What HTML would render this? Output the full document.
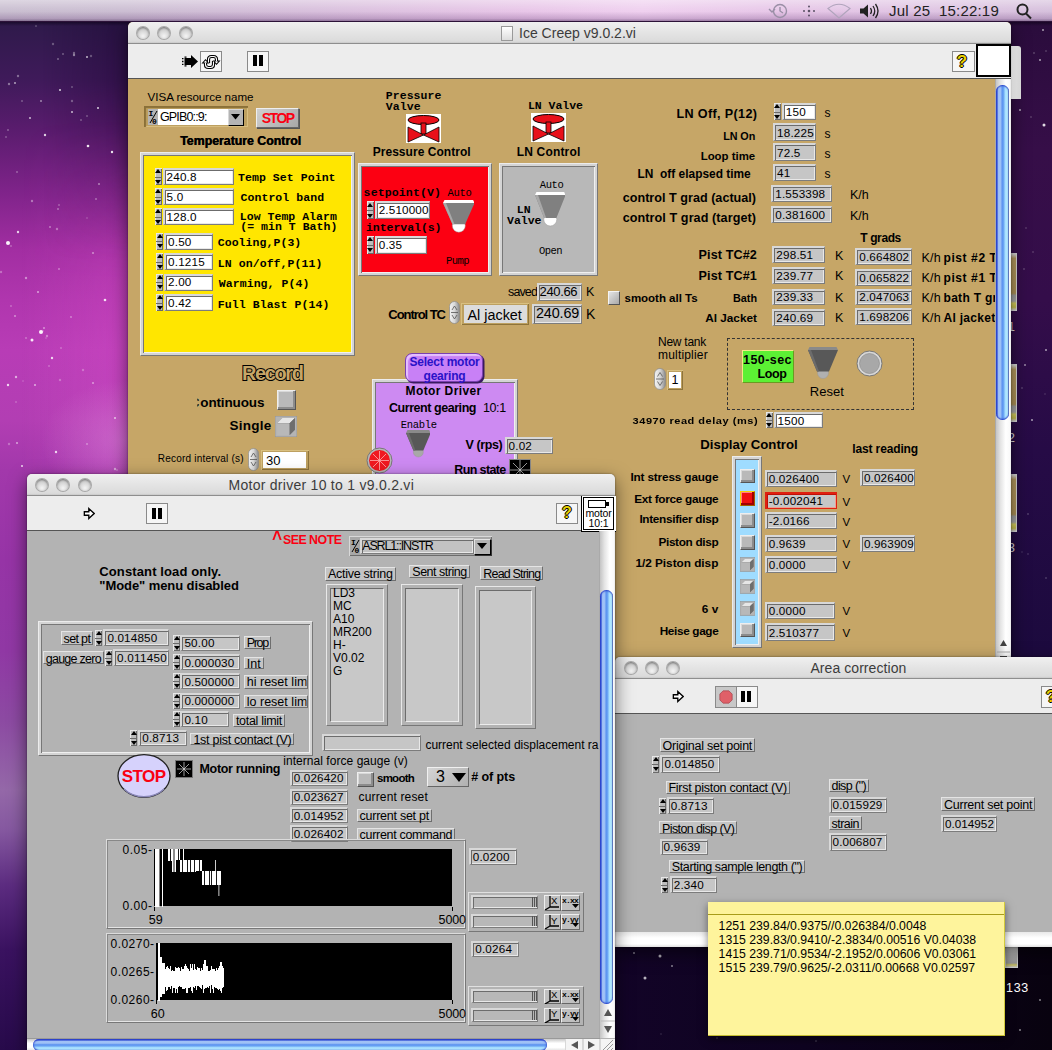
<!DOCTYPE html>
<html><head><meta charset="utf-8"><title>Ice Creep</title>
<style>
html,body{margin:0;padding:0;}
body{width:1052px;height:1050px;overflow:hidden;background:#1a0830;font-family:"Liberation Sans",sans-serif;}
#root{position:relative;width:1052px;height:1050px;overflow:hidden;}
#root div,#root svg,#root i{position:absolute;box-sizing:content-box;}
.t{white-space:pre;color:#000;font-family:"Liberation Sans",sans-serif;}
.m{font-family:"Liberation Mono",monospace;}
.b{font-weight:bold;}
.f{border-style:solid;border-width:2px 1px 1px 2px;border-color:#d8d8d8 #7c7c7c #7c7c7c #d8d8d8;box-shadow:inset 1px 1px 0 #6c6c6c,inset -1px -1px 0 #e8e8e8;}
.lb{border:1px solid;border-color:#e4e4e4 #6e6e6e #6e6e6e #e4e4e4;background:#c4c4c4;}
.sp{background:#bdbdbd;box-shadow:inset 1px 1px 0 #e8e8e8,inset -1px -1px 0 #6a6a6a;}
.sp i{position:absolute;left:0;width:100%;height:50%;}
.sp i.u{top:0;border-bottom:1px solid #6a6a6a;box-sizing:border-box;}
.sp i.d{top:50%;}
.sp i.u:after{content:"";position:absolute;left:50%;top:50%;margin:-3px 0 0 -3px;border:3px solid transparent;border-top:0;border-bottom:4px solid #000;}
.sp i.d:after{content:"";position:absolute;left:50%;top:50%;margin:-1px 0 0 -3px;border:3px solid transparent;border-bottom:0;border-top:4px solid #000;}
.win{box-shadow:0 6px 18px rgba(0,0,0,.55),0 0 2px rgba(0,0,0,.5);}
.tb{background:linear-gradient(#f0f0f0,#e4e4e4 50%,#dbdbdb 92%,#c8c8c8);border-radius:5px 5px 0 0;border-bottom:1px solid #8e8e8e;}
.tl{border-radius:50%;background:radial-gradient(circle at 50% 75%,#f4f4f4,#cfcfcf 60%,#b4b4b4);box-shadow:inset 0 1px 2px rgba(0,0,0,.4),0 0 0 1px #a8a8a8;}
.tool{background:#ededed;border-bottom:1px solid #555;}
.btn{background:#f6f6f6;border:1px solid #8a8a8a;}
.frame{border:1px solid;border-color:#ececec #777 #777 #ececec;box-shadow:inset 1px 1px 0 #d4d4d4,inset -1px -1px 0 #d4d4d4,inset 2px 2px 0 #d4d4d4,inset -2px -2px 0 #d4d4d4,inset 3px 3px 0 #777,inset -3px -3px 0 #f0f0f0;}

</style></head>
<body>
<div id="root">
<!-- desktop -->
<div class="" style="left:0px;top:0px;width:140px;height:1050px;background:linear-gradient(180deg,#2c1a48 0px,#2e1a4a 21px,#3f1a5a 80px,#5a1c6e 130px,#7e2389 190px,#a22ea2 250px,#b036ae 300px,#b83cb6 350px,#b23eb3 420px,#a238ab 470px,#9634a6 560px,#9038a4 650px,#8c4aa2 720px,#9468a8 790px,#8558a0 830px,#5c2c80 885px,#3a1260 950px,#270a4a 1050px);"></div>
<div class="" style="left:0px;top:120px;width:140px;height:360px;background:linear-gradient(90deg,rgba(255,90,220,0) 15%,rgba(255,100,225,.2) 95%);-webkit-mask-image:linear-gradient(180deg,rgba(0,0,0,0),#000 45%);mask-image:linear-gradient(180deg,rgba(0,0,0,0),#000 45%);"></div>
<div class="" style="left:0px;top:21px;width:140px;height:240px;background:linear-gradient(90deg,rgba(20,0,40,0) 30%,rgba(20,0,40,.38) 100%);-webkit-mask-image:linear-gradient(180deg,#000 25%,rgba(0,0,0,0));mask-image:linear-gradient(180deg,#000 25%,rgba(0,0,0,0));"></div>
<div class="" style="left:40px;top:380px;width:100px;height:110px;background:radial-gradient(ellipse at 85% 55%,rgba(225,150,225,.4),rgba(225,150,225,0) 70%);"></div>
<div class="" style="left:1000px;top:0px;width:52px;height:1050px;background:linear-gradient(180deg,#2a0c3c 21px,#360e48 150px,#340d4a 300px,#260b46 450px,#1c0a3e 650px,#14052c 900px,#12032a 1050px);"></div>
<div class="" style="left:600px;top:940px;width:452px;height:110px;background:linear-gradient(90deg,#130428,#0e0320 45%,#08020f 100%);"></div>
<svg width="1052" height="1050" style="left:0;top:0;filter:blur(.6px)"><circle cx="8" cy="243" r="2" fill="#fff" fill-opacity="0.95"/><circle cx="18" cy="232" r="1.2" fill="#fff" fill-opacity="0.8"/><circle cx="41" cy="332" r="2" fill="#fff" fill-opacity="0.95"/><circle cx="32" cy="340" r="1.5" fill="#fff" fill-opacity="0.9"/><circle cx="88" cy="146" r="1.3" fill="#fff" fill-opacity="0.9"/><circle cx="112" cy="152" r="1.2" fill="#fff" fill-opacity="0.9"/><circle cx="60" cy="90" r="1" fill="#fff" fill-opacity="0.8"/><circle cx="98" cy="108" r="1" fill="#fff" fill-opacity="0.8"/><circle cx="30" cy="118" r="1" fill="#fff" fill-opacity="0.7"/><circle cx="45" cy="135" r="1.2" fill="#fff" fill-opacity="0.8"/><circle cx="72" cy="112" r="1" fill="#fff" fill-opacity="0.7"/><circle cx="87" cy="57" r="1" fill="#fff" fill-opacity="0.7"/><circle cx="105" cy="300" r="1.3" fill="#fff" fill-opacity="0.85"/><circle cx="52" cy="358" r="1.2" fill="#fff" fill-opacity="0.8"/><circle cx="8" cy="385" r="1.2" fill="#fff" fill-opacity="0.8"/><circle cx="56" cy="452" r="1.2" fill="#fff" fill-opacity="0.8"/><circle cx="115" cy="418" r="1" fill="#fff" fill-opacity="0.7"/><circle cx="22" cy="466" r="1" fill="#fff" fill-opacity="0.8"/><circle cx="1044" cy="125" r="1.5" fill="#fff" fill-opacity="0.85"/><circle cx="1040" cy="60" r="1" fill="#fff" fill-opacity="0.6"/><circle cx="1020" cy="110" r="1" fill="#fff" fill-opacity="0.6"/><circle cx="1043" cy="30" r="1" fill="#fff" fill-opacity="0.6"/><circle cx="1032" cy="420" r="1" fill="#fff" fill-opacity="0.6"/><circle cx="1046" cy="350" r="1" fill="#fff" fill-opacity="0.6"/><circle cx="1025" cy="365" r="1" fill="#fff" fill-opacity="0.5"/><circle cx="660" cy="956" r="1.5" fill="#fff" fill-opacity="0.7"/><circle cx="645" cy="978" r="1.5" fill="#fff" fill-opacity="0.7"/><circle cx="672" cy="966" r="1" fill="#fff" fill-opacity="0.5"/><circle cx="634" cy="953" r="1" fill="#fff" fill-opacity="0.5"/><circle cx="1040" cy="1000" r="1" fill="#fff" fill-opacity="0.5"/><circle cx="1020" cy="1030" r="1" fill="#fff" fill-opacity="0.5"/><circle cx="41" cy="101" r="1" fill="#fff" fill-opacity="0.48"/><circle cx="9" cy="444" r="1.2" fill="#fff" fill-opacity="0.28"/><circle cx="74" cy="53" r="1.2" fill="#fff" fill-opacity="0.33"/><circle cx="11" cy="246" r="1" fill="#fff" fill-opacity="0.27"/><circle cx="11" cy="306" r="1" fill="#fff" fill-opacity="0.27"/><circle cx="72" cy="87" r="0.8" fill="#fff" fill-opacity="0.47"/><circle cx="74" cy="55" r="1.2" fill="#fff" fill-opacity="0.45"/><circle cx="6" cy="137" r="0.8" fill="#fff" fill-opacity="0.44"/><circle cx="17" cy="172" r="1" fill="#fff" fill-opacity="0.3"/><circle cx="15" cy="316" r="1" fill="#fff" fill-opacity="0.45"/><circle cx="87" cy="116" r="0.8" fill="#fff" fill-opacity="0.45"/><circle cx="81" cy="120" r="1" fill="#fff" fill-opacity="0.28"/><circle cx="91" cy="56" r="1.2" fill="#fff" fill-opacity="0.27"/><circle cx="26" cy="278" r="1.2" fill="#fff" fill-opacity="0.44"/><circle cx="99" cy="184" r="1" fill="#fff" fill-opacity="0.45"/><circle cx="58" cy="209" r="1" fill="#fff" fill-opacity="0.34"/><circle cx="23" cy="381" r="0.8" fill="#fff" fill-opacity="0.28"/><circle cx="38" cy="292" r="1" fill="#fff" fill-opacity="0.56"/><circle cx="93" cy="253" r="1" fill="#fff" fill-opacity="0.46"/><circle cx="9" cy="84" r="1.2" fill="#fff" fill-opacity="0.4"/><circle cx="96" cy="199" r="0.8" fill="#fff" fill-opacity="0.58"/><circle cx="53" cy="44" r="1.2" fill="#fff" fill-opacity="0.28"/><circle cx="71" cy="317" r="1" fill="#fff" fill-opacity="0.37"/><circle cx="44" cy="328" r="1" fill="#fff" fill-opacity="0.45"/><circle cx="58" cy="59" r="0.8" fill="#fff" fill-opacity="0.58"/><circle cx="60" cy="380" r="1.2" fill="#fff" fill-opacity="0.27"/><circle cx="93" cy="383" r="1" fill="#fff" fill-opacity="0.48"/><circle cx="87" cy="444" r="1" fill="#fff" fill-opacity="0.35"/><circle cx="49" cy="366" r="1" fill="#fff" fill-opacity="0.26"/><circle cx="59" cy="205" r="0.8" fill="#fff" fill-opacity="0.46"/><circle cx="63" cy="54" r="0.8" fill="#fff" fill-opacity="0.52"/><circle cx="16" cy="402" r="0.8" fill="#fff" fill-opacity="0.39"/><circle cx="117" cy="470" r="1" fill="#fff" fill-opacity="0.28"/><circle cx="57" cy="229" r="1.2" fill="#fff" fill-opacity="0.35"/><circle cx="17" cy="443" r="1" fill="#fff" fill-opacity="0.55"/><circle cx="35" cy="385" r="1" fill="#fff" fill-opacity="0.6"/><circle cx="87" cy="218" r="0.8" fill="#fff" fill-opacity="0.3"/><circle cx="22" cy="101" r="0.8" fill="#fff" fill-opacity="0.48"/><circle cx="1" cy="272" r="1.2" fill="#fff" fill-opacity="0.31"/><circle cx="36" cy="26" r="0.8" fill="#fff" fill-opacity="0.4"/><circle cx="47" cy="336" r="1.2" fill="#fff" fill-opacity="0.36"/><circle cx="16" cy="377" r="1.2" fill="#fff" fill-opacity="0.58"/><circle cx="83" cy="370" r="1.2" fill="#fff" fill-opacity="0.27"/><circle cx="115" cy="469" r="1.2" fill="#fff" fill-opacity="0.53"/><circle cx="50" cy="227" r="1" fill="#fff" fill-opacity="0.39"/><circle cx="61" cy="348" r="1" fill="#fff" fill-opacity="0.27"/><circle cx="8" cy="130" r="1" fill="#fff" fill-opacity="0.31"/><circle cx="43" cy="331" r="0.8" fill="#fff" fill-opacity="0.29"/><circle cx="72" cy="101" r="1.2" fill="#fff" fill-opacity="0.29"/><circle cx="46" cy="338" r="0.8" fill="#fff" fill-opacity="0.27"/><circle cx="26" cy="338" r="1" fill="#fff" fill-opacity="0.3"/><circle cx="32" cy="201" r="1.2" fill="#fff" fill-opacity="0.38"/><circle cx="15" cy="83" r="1" fill="#fff" fill-opacity="0.6"/><circle cx="59" cy="269" r="1" fill="#fff" fill-opacity="0.36"/><circle cx="18" cy="76" r="1.2" fill="#fff" fill-opacity="0.37"/><circle cx="1028" cy="514" r="0.7" fill="#fff" fill-opacity="0.41"/><circle cx="1022" cy="552" r="0.7" fill="#fff" fill-opacity="0.21"/><circle cx="1045" cy="394" r="0.7" fill="#fff" fill-opacity="0.24"/><circle cx="1046" cy="51" r="0.7" fill="#fff" fill-opacity="0.39"/><circle cx="1031" cy="117" r="0.7" fill="#fff" fill-opacity="0.37"/><circle cx="1028" cy="554" r="0.7" fill="#fff" fill-opacity="0.29"/><circle cx="1022" cy="388" r="0.7" fill="#fff" fill-opacity="0.39"/><circle cx="1046" cy="578" r="0.7" fill="#fff" fill-opacity="0.39"/><circle cx="1033" cy="252" r="0.7" fill="#fff" fill-opacity="0.35"/><circle cx="1024" cy="269" r="0.7" fill="#fff" fill-opacity="0.4"/><circle cx="1026" cy="228" r="0.7" fill="#fff" fill-opacity="0.33"/><circle cx="1034" cy="53" r="0.7" fill="#fff" fill-opacity="0.45"/><circle cx="1022" cy="985" r="0.7" fill="#fff" fill-opacity="0.29"/><circle cx="717" cy="1038" r="0.7" fill="#fff" fill-opacity="0.32"/><circle cx="794" cy="1007" r="0.7" fill="#fff" fill-opacity="0.36"/><circle cx="988" cy="994" r="0.7" fill="#fff" fill-opacity="0.39"/><circle cx="804" cy="960" r="0.7" fill="#fff" fill-opacity="0.24"/><circle cx="734" cy="1010" r="0.7" fill="#fff" fill-opacity="0.24"/><circle cx="722" cy="1011" r="0.7" fill="#fff" fill-opacity="0.32"/><circle cx="930" cy="950" r="0.7" fill="#fff" fill-opacity="0.3"/><circle cx="952" cy="994" r="0.7" fill="#fff" fill-opacity="0.36"/><circle cx="661" cy="1034" r="0.7" fill="#fff" fill-opacity="0.22"/><circle cx="816" cy="1041" r="0.7" fill="#fff" fill-opacity="0.35"/><circle cx="862" cy="972" r="0.7" fill="#fff" fill-opacity="0.29"/><circle cx="943" cy="992" r="0.7" fill="#fff" fill-opacity="0.22"/><circle cx="987" cy="1000" r="0.7" fill="#fff" fill-opacity="0.29"/></svg>
<div class="" style="left:0px;top:22px;width:1052px;height:4px;background:linear-gradient(180deg,rgba(10,0,20,.55),rgba(10,0,20,0));"></div>
<div class="" style="left:1010px;top:253px;width:6px;height:56px;background:linear-gradient(180deg,#d8d8d8 0,#b89c60 8%,#b09458 70%,#a0a0a0 74%,#a8a8a8 84%,#d8d060 88%,#c8c050 95%,#d0d0d0 100%);border:1px solid #d8d8d8;border-left:0;"></div>
<div class="" style="left:1010px;top:364px;width:6px;height:56px;background:linear-gradient(180deg,#d8d8d8 0,#b89c60 8%,#b09458 70%,#a0a0a0 74%,#a8a8a8 84%,#d8d060 88%,#c8c050 95%,#d0d0d0 100%);border:1px solid #d8d8d8;border-left:0;"></div>
<div class="" style="left:1010px;top:474px;width:6px;height:56px;background:linear-gradient(180deg,#d8d8d8 0,#b89c60 8%,#b09458 70%,#a0a0a0 74%,#a8a8a8 84%,#d8d060 88%,#c8c050 95%,#d0d0d0 100%);border:1px solid #d8d8d8;border-left:0;"></div>
<div class="t" style="left:1008.0px;top:321.0px;font-size:12.5px;line-height:12.5px;color:#ddd;">1</div>
<div class="t" style="left:1008.0px;top:432.0px;font-size:12.5px;line-height:12.5px;color:#ddd;">2</div>
<div class="t" style="left:1008.0px;top:542.0px;font-size:12.5px;line-height:12.5px;color:#ddd;">3</div>
<div class="" style="left:1005px;top:946px;width:11px;height:20px;background:linear-gradient(180deg,#d8d8d8,#9a9a9a 80%,#c8c060 90%,#bbb);border:1px solid #ccc;"></div>
<div class="t" style="left:1006.0px;top:982.0px;font-size:12.5px;line-height:12.5px;letter-spacing:0.71px;color:#fff;">133</div>
<!-- Ice Creep -->
<div class="win" style="left:128px;top:22px;width:883px;height:640px;background:#c6a667;border-radius:5px 5px 0 0;"></div>
<div class="tb" style="left:128px;top:22px;width:883px;height:21px;"></div>
<div class="" style="left:1010px;top:46px;width:11px;height:52.5px;background:linear-gradient(90deg,#b4b4b4,#d6d6d6 20%,#dadada 60%,#d6d6d6);border-radius:0 3px 0 0;"></div>
<div class="tl" style="left:136.5px;top:27px;width:12px;height:12px;"></div>
<div class="tl" style="left:158px;top:27px;width:12px;height:12px;"></div>
<div class="tl" style="left:179.5px;top:27px;width:12px;height:12px;"></div>
<div class="" style="left:501px;top:26px;width:10px;height:13px;background:linear-gradient(#fff,#ddd);border:1px solid #999;"></div>
<div class="t" style="left:519.0px;top:26.0px;font-size:14px;line-height:14px;letter-spacing:0.01px;color:#3c3c3c;">Ice Creep v9.0.2.vi</div>
<div class="tool" style="left:128px;top:44px;width:883px;height:34px;"></div>
<svg style="left:181.500px;top:55px" width="16" height="13" viewBox="0 0 16 13"><path d="M0 3h1.500v1.300H0zM0 5.800h1.500v1.400H0zM0 8.700h1.500V10H0zM2.500 1.500h2v1.300h-2zM2.500 10.200h2v1.300h-2zM2.500 3h6.500V0l7 6.500L9 13v-3H2.500z" fill="#000"/></svg>
<div class="btn" style="left:200px;top:51px;width:20px;height:19px;"></div>
<svg style="left:200px;top:51.500px" width="22" height="20" viewBox="0 0 22 20"><g fill="none" stroke="#000" stroke-width="3.200"><path d="M8.500 11V7.500Q8.500 4.500 11.500 4.500H13.500Q16.500 4.500 16.500 7.500V9"/><path d="M13.500 9V12.500Q13.500 15.500 10.500 15.500H8.500Q5.500 15.500 5.500 12.500V11"/></g><path d="M12.500 8.500h8L16.500 13zM9.500 11.500h-8L5.500 7z" fill="#000"/><g fill="none" stroke="#fff" stroke-width="1.100"><path d="M8.500 10.500V7.500Q8.500 4.500 11.500 4.500H13.500Q16.500 4.500 16.500 7.500V9.500"/><path d="M13.500 9.500V12.500Q13.500 15.500 10.500 15.500H8.500Q5.500 15.500 5.500 12.500V10.500"/></g><path d="M14.600 9.500h3.800L16.500 11.600zM7.400 10.500H3.600L5.500 8.400z" fill="#fff"/></svg>
<div class="btn" style="left:247px;top:51px;width:20px;height:19px;"></div>
<div class="" style="left:253px;top:55px;width:3.5px;height:11px;background:#000"></div>
<div class="" style="left:259px;top:55px;width:3.5px;height:11px;background:#000"></div>
<div class="btn" style="left:951.5px;top:51px;width:21px;height:19px;"></div>
<div class="t b" style="left:956.8px;top:53.0px;font-size:17px;line-height:17px;color:#e8d000;text-shadow:1px 0 0 #000,-1px 0 0 #000,0 1px 0 #000,0 -1px 0 #000;">?</div>
<div class="" style="left:976px;top:44px;width:30.5px;height:29px;background:#fff;border:2px solid #000;"></div>
<div class="" style="left:995px;top:79px;width:15px;height:583px;background:linear-gradient(90deg,#c4c4c4,#e4e4e4 30%,#fff 65%,#fafafa 90%,#e8e8e8);border-left:1px solid #aaa;"></div>
<div class="" style="left:996.2px;top:85px;width:12.6px;height:335px;border-radius:7px;background:linear-gradient(90deg,#2a40c8 0,#3a58d8 8%,#a4c4f6 20%,#9cc0f6 35%,#5c92f0 48%,#6aa4f4 58%,#a8e0ff 72%,#b4ecff 88%,#5a6c98 100%);box-shadow:inset 0 1px 1.500px #2a40c8,inset 0 -1px 1.500px #2a40c8;"></div>
<svg style="left:997px;top:628px" width="13" height="34" viewBox="0 0 13 34"><path d="M6.5 12L3 18h7z" fill="#444"/><path d="M0 24h13" stroke="#aaa"/><path d="M3 29h7" stroke="#444" stroke-width="2"/></svg>
<div class="t" style="left:147.5px;top:91.0px;font-size:11.6px;line-height:11.6px;letter-spacing:-0.02px;">VISA resource name</div>
<div class="" style="left:144px;top:105.5px;width:104px;height:21.5px;background:#bda060;box-shadow:inset 2px 2px 1px #8a7038,inset -1px -1px 0 #d8be80;"></div>
<div class="" style="left:147.5px;top:109px;width:10.5px;height:15.5px;background:#b4b4b4;"></div>
<div class="t m b" style="left:148.5px;top:110.0px;font-size:8px;line-height:8px;">I</div>
<div class="t m b" style="left:152.0px;top:118.0px;font-size:8px;line-height:8px;">0</div>
<svg style="left:147.500px;top:109px" width="11" height="16"><path d="M9 2L2 14" stroke="#000" stroke-width="1"/></svg>
<div class="" style="left:158px;top:109px;width:69.5px;height:15.5px;background:#fff;"></div>
<div class="t" style="left:160.0px;top:111.0px;font-size:12.5px;line-height:12.5px;letter-spacing:-0.85px;">GPIB0::9:</div>
<div class="" style="left:227.5px;top:109px;width:14px;height:14.5px;background:#b4b4b4;border:1px solid;border-color:#d8d8d8 #000 #000 #d8d8d8;"></div>
<svg style="left:231px;top:113.500px" width="9" height="6"><path d="M0 0h9L4.500 5.500z" fill="#000"/></svg>
<div class="" style="left:256px;top:108px;width:41px;height:18px;background:linear-gradient(135deg,#d0d0d0,#a8a8a8);border:1px solid;border-color:#eee #666 #666 #eee;box-shadow:1px 1px 0 #555;"></div>
<div class="t b" style="left:261.7px;top:111.0px;font-size:14px;line-height:14px;letter-spacing:-1.47px;color:#fa0012;">STOP</div>
<div class="t b" style="left:180.0px;top:135.0px;font-size:12.3px;line-height:12.3px;letter-spacing:0.01px;text-shadow:0.5px 0 0 #000;">Temperature Control</div>
<div class="frame" style="left:140px;top:152px;width:213px;height:202px;background:#ffe600;"></div>
<div class="sp" style="left:154.5px;top:168px;width:7px;height:17px"><i class="u"></i><i class="d"></i></div>
<div class="f" style="left:162.5px;top:168px;width:68px;height:14px;background:#fff;"></div>
<div class="t" style="left:166.5px;top:171.0px;font-size:11.7px;line-height:11.7px;letter-spacing:0.20px;">240.8</div>
<div class="sp" style="left:154.5px;top:188px;width:7px;height:17px"><i class="u"></i><i class="d"></i></div>
<div class="f" style="left:162.5px;top:188px;width:68px;height:14px;background:#fff;"></div>
<div class="t" style="left:166.5px;top:191.0px;font-size:11.7px;line-height:11.7px;letter-spacing:0.19px;">5.0</div>
<div class="sp" style="left:154.5px;top:208px;width:7px;height:17px"><i class="u"></i><i class="d"></i></div>
<div class="f" style="left:162.5px;top:208px;width:68px;height:14px;background:#fff;"></div>
<div class="t" style="left:166.5px;top:211.0px;font-size:11.7px;line-height:11.7px;letter-spacing:0.20px;">128.0</div>
<div class="sp" style="left:156px;top:232.5px;width:7px;height:17px"><i class="u"></i><i class="d"></i></div>
<div class="f" style="left:164px;top:232.5px;width:45.5px;height:14px;background:#fff;"></div>
<div class="t" style="left:168.0px;top:236.0px;font-size:11.7px;line-height:11.7px;letter-spacing:0.19px;">0.50</div>
<div class="sp" style="left:156px;top:253px;width:7px;height:17px"><i class="u"></i><i class="d"></i></div>
<div class="f" style="left:164px;top:253px;width:45.5px;height:14px;background:#fff;"></div>
<div class="t" style="left:168.0px;top:256.0px;font-size:11.7px;line-height:11.7px;letter-spacing:0.20px;">0.1215</div>
<div class="sp" style="left:156px;top:273.5px;width:7px;height:17px"><i class="u"></i><i class="d"></i></div>
<div class="f" style="left:164px;top:273.5px;width:45.5px;height:14px;background:#fff;"></div>
<div class="t" style="left:168.0px;top:276.0px;font-size:11.7px;line-height:11.7px;letter-spacing:0.19px;">2.00</div>
<div class="sp" style="left:156px;top:294px;width:7px;height:17px"><i class="u"></i><i class="d"></i></div>
<div class="f" style="left:164px;top:294px;width:45.5px;height:14px;background:#fff;"></div>
<div class="t" style="left:168.0px;top:297.0px;font-size:11.7px;line-height:11.7px;letter-spacing:0.19px;">0.42</div>
<div class="t m b" style="left:238.0px;top:172.0px;font-size:11.5px;line-height:11.5px;letter-spacing:0.07px;">Temp Set Point</div>
<div class="t m b" style="left:240.5px;top:192.0px;font-size:11.5px;line-height:11.5px;letter-spacing:0.07px;">Control band</div>
<div class="t m b" style="left:239.8px;top:211.0px;font-size:11.5px;line-height:11.5px;letter-spacing:0.03px;">Low Temp Alarm</div>
<div class="t m b" style="left:240.3px;top:221.0px;font-size:11.5px;line-height:11.5px;letter-spacing:0.03px;">(= min T Bath)</div>
<div class="t m b" style="left:217.7px;top:237.0px;font-size:11.5px;line-height:11.5px;letter-spacing:0.07px;">Cooling,P(3)</div>
<div class="t m b" style="left:217.7px;top:258.0px;font-size:11.5px;line-height:11.5px;letter-spacing:0.09px;">LN on/off,P(11)</div>
<div class="t m b" style="left:218.8px;top:278.0px;font-size:11.5px;line-height:11.5px;letter-spacing:0.07px;">Warming, P(4)</div>
<div class="t m b" style="left:217.7px;top:299.0px;font-size:11.5px;line-height:11.5px;letter-spacing:0.09px;">Full Blast P(14)</div>
<div class="t m b" style="left:385.8px;top:90.0px;font-size:11.5px;line-height:11.5px;letter-spacing:0.05px;">Pressure</div>
<div class="t m b" style="left:385.8px;top:101.0px;font-size:11.5px;line-height:11.5px;letter-spacing:0.10px;">Valve</div>
<svg style="left:405.5px;top:114px" width="35" height="29" viewBox="0 0 35 29"><rect width="35" height="29" fill="#fff"/><ellipse cx="17.5" cy="6" rx="15.5" ry="4.5" fill="#e8101a" stroke="#000"/><rect x="15" y="9" width="5" height="11" fill="#e8101a" stroke="#000" stroke-width=".8"/><path d="M2 13l15.5 8L2 28zM33 13l-15.5 8L33 28z" fill="#e8101a" stroke="#000" stroke-width=".8"/></svg>
<div class="t b" style="left:372.7px;top:146.0px;font-size:12px;line-height:12px;letter-spacing:0.04px;">Pressure Control</div>
<div class="t m b" style="left:528.0px;top:100.0px;font-size:11.5px;line-height:11.5px;letter-spacing:-0.03px;">LN Valve</div>
<svg style="left:531px;top:113px" width="35" height="29" viewBox="0 0 35 29"><rect width="35" height="29" fill="#fff"/><ellipse cx="17.5" cy="6" rx="15.5" ry="4.5" fill="#e8101a" stroke="#000"/><rect x="15" y="9" width="5" height="11" fill="#e8101a" stroke="#000" stroke-width=".8"/><path d="M2 13l15.5 8L2 28zM33 13l-15.5 8L33 28z" fill="#e8101a" stroke="#000" stroke-width=".8"/></svg>
<div class="t b" style="left:516.8px;top:146.0px;font-size:12px;line-height:12px;letter-spacing:0.16px;">LN Control</div>
<div class="frame" style="left:357.5px;top:162.5px;width:132.5px;height:111px;background:#fc0012;"></div>
<div class="t m b" style="left:363.6px;top:187.0px;font-size:11.5px;line-height:11.5px;letter-spacing:0.14px;">setpoint(V)</div>
<div class="sp" style="left:366.7px;top:201px;width:7px;height:18px"><i class="u"></i><i class="d"></i></div>
<div class="f" style="left:374.7px;top:201px;width:52.5px;height:15px;background:#fff;"></div>
<div class="t" style="left:378.7px;top:204.0px;font-size:11.7px;line-height:11.7px;letter-spacing:0.15px;">2.510000</div>
<div class="t m b" style="left:366.0px;top:222.0px;font-size:11.5px;line-height:11.5px;letter-spacing:-0.04px;">interval(s)</div>
<div class="sp" style="left:366.7px;top:236px;width:7px;height:17.5px"><i class="u"></i><i class="d"></i></div>
<div class="f" style="left:374.7px;top:236px;width:49px;height:14.5px;background:#fff;"></div>
<div class="t" style="left:378.7px;top:239.0px;font-size:11.7px;line-height:11.7px;letter-spacing:0.19px;">0.35</div>
<div class="t m" style="left:447.6px;top:188.0px;font-size:10.5px;line-height:10.5px;letter-spacing:-0.30px;">Auto</div>
<svg style="left:442.7px;top:199.6px" width="31.6" height="33.7" viewBox="0 0 31.6 33.7"><circle cx="15.8" cy="25.7" r="6.5" fill="#fff" stroke="#999" stroke-width=".5"/><path d="M0 3 L31.6 3 L22.12 24.2 L9.48 24.2z" fill="#808080"/><path d="M0 3 L3 3 L11.48 24.2 L9.48 24.2z" fill="#a8a8a8"/><path d="M1.500 0h28.6l1.500 3H0z" fill="#fff"/></svg>
<div class="t m" style="left:445.9px;top:256.0px;font-size:10.5px;line-height:10.5px;letter-spacing:-0.55px;">Pump</div>
<div class="frame" style="left:499px;top:162.5px;width:96.5px;height:111px;background:#b8b8b8;"></div>
<div class="t m" style="left:539.8px;top:180.0px;font-size:10.5px;line-height:10.5px;letter-spacing:-0.43px;">Auto</div>
<svg style="left:534.9px;top:191.7px" width="30.6" height="35.5" viewBox="0 0 30.6 35.5"><circle cx="15.3" cy="27.5" r="6.5" fill="#fff" stroke="#999" stroke-width=".5"/><path d="M0 3 L30.6 3 L21.42 26 L9.18 26z" fill="#808080"/><path d="M0 3 L3 3 L11.18 26 L9.18 26z" fill="#a8a8a8"/><path d="M1.500 0h27.6l1.500 3H0z" fill="#fff"/></svg>
<div class="t m b" style="left:516.8px;top:204.0px;font-size:11.5px;line-height:11.5px;letter-spacing:0.10px;">LN</div>
<div class="t m b" style="left:507.0px;top:215.0px;font-size:11.5px;line-height:11.5px;letter-spacing:-0.00px;">Valve</div>
<div class="t m" style="left:539.0px;top:246.0px;font-size:10.5px;line-height:10.5px;letter-spacing:-0.55px;">Open</div>
<div class="t" style="left:508.0px;top:286.0px;font-size:12.5px;line-height:12.5px;letter-spacing:-0.87px;">saved</div>
<div class="f" style="left:536.6px;top:282.7px;width:42.2px;height:15px;background:#c6c6c6;"></div>
<div class="t" style="left:539.6px;top:285.0px;font-size:13px;line-height:13px;letter-spacing:-0.38px;">240.66</div>
<div class="t" style="left:586.0px;top:286.0px;font-size:12.5px;line-height:12.5px;">K</div>
<div class="t b" style="left:388.3px;top:308.0px;font-size:13px;line-height:13px;letter-spacing:-1.05px;">Control TC</div>
<svg style="left:449.4px;top:300.5px" width="11" height="23" viewBox="0 0 11 23"><defs><linearGradient id="og449" x1="0" x2="1"><stop offset="0" stop-color="#f4f4f4"/><stop offset=".5" stop-color="#d8d8d8"/><stop offset="1" stop-color="#8a8a8a"/></linearGradient></defs><rect x=".5" y=".5" width="10" height="22" rx="5.0" fill="url(#og449)" stroke="#8a8a8a" stroke-width=".7"/><path d="M3.0 9.0L5.5 5.0L8.0 9.0M3.0 14.0L5.5 18.0L8.0 14.0M2 11.5H9" stroke="#555" stroke-width=".8" fill="none"/></svg>
<div class="" style="left:461px;top:302.5px;width:68px;height:22.5px;background:#bda060;box-shadow:inset 1px 1px 0 #d9c080,inset -1px -1px 0 #8e743c;"></div>
<div class="" style="left:463.7px;top:305px;width:63px;height:17.5px;background:#dcdcdc;"></div>
<div class="t" style="left:467.5px;top:308.0px;font-size:14.3939px;line-height:14.3939px;">Al jacket</div>
<div class="f" style="left:532.4px;top:303.7px;width:46.4px;height:17.6px;background:#c6c6c6;"></div>
<div class="t" style="left:535.9px;top:306.0px;font-size:14.4px;line-height:14.4px;letter-spacing:-0.12px;">240.69</div>
<div class="t" style="left:586.0px;top:307.0px;font-size:14px;line-height:14px;">K</div>
<div class="" style="left:608px;top:290.5px;width:10px;height:12px;background:linear-gradient(135deg,#e4e4e4,#a8a8a8);border:1px solid;border-color:#f4f4f4 #555 #555 #f4f4f4;"></div>
<div class="t b" style="left:624.5px;top:293.0px;font-size:11.5px;line-height:11.5px;letter-spacing:-0.02px;">smooth all Ts</div>
<div class="frame" style="left:372.2px;top:378.6px;width:143.8px;height:110px;background:#cd8af2;"></div>
<div class="" style="left:405px;top:352.7px;width:76px;height:27.5px;background:#c880f6;border-radius:7px;border:1px solid #7a40b0;box-shadow:1.5px 1.5px 0 #3a1a60,inset 2px 2px 1px #e6c0ff;"></div>
<div class="t b" style="left:409.5px;top:356.0px;font-size:12px;line-height:12px;letter-spacing:-0.22px;color:#2a12c8;">Select motor</div>
<div class="t b" style="left:423.5px;top:370.0px;font-size:12px;line-height:12px;letter-spacing:-0.19px;color:#2a12c8;">gearing</div>
<div class="t b" style="left:405.6px;top:385.0px;font-size:12px;line-height:12px;letter-spacing:0.39px;">Motor Driver</div>
<div class="t b" style="left:389.0px;top:402.0px;font-size:12.5px;line-height:12.5px;letter-spacing:-0.45px;">Current gearing</div>
<div class="t" style="left:483.0px;top:402.0px;font-size:12.5px;line-height:12.5px;letter-spacing:-0.41px;">10:1</div>
<div class="t m" style="left:400.7px;top:420.0px;font-size:10.5px;line-height:10.5px;letter-spacing:-0.30px;">Enable</div>
<svg style="left:405.6px;top:430px" width="24.7" height="28.5" viewBox="0 0 24.7 28.5"><circle cx="12.35" cy="22" r="5" fill="#a8a8a8" stroke="#999" stroke-width=".5"/><path d="M0 3 L24.7 3 L17.29 20.5 L7.41 20.5z" fill="#585858"/><path d="M0 3 L3 3 L9.41 20.5 L7.41 20.5z" fill="#6c6c6c"/><path d="M1.500 0h21.7l1.500 3H0z" fill="#8a8a8a"/></svg>
<div class="t b" style="left:465.4px;top:439.0px;font-size:12.5px;line-height:12.5px;letter-spacing:-0.37px;">V (rps)</div>
<div class="f" style="left:504.5px;top:436.7px;width:45.7px;height:14.3px;background:#c6c6c6;"></div>
<div class="t" style="left:508.5px;top:440.0px;font-size:11.7px;line-height:11.7px;letter-spacing:0.19px;">0.02</div>
<div class="t b" style="left:454.3px;top:464.0px;font-size:12.5px;line-height:12.5px;letter-spacing:-0.62px;">Run state</div>
<div class="" style="left:509.4px;top:459px;width:20px;height:20px;background:#000;border:1px solid #888;"></div>
<svg style="left:510px;top:460px" width="20" height="14"><g stroke="#ddd" stroke-width=".7"><path d="M10 0v14M0 10h20M3 3l14 14M17 3L3 17"/></g></svg>
<svg style="left:366px;top:447px" width="27" height="27" viewBox="0 0 27 27"><circle cx="13.5" cy="13.5" r="12.5" fill="#b8b8b8" stroke="#777"/><circle cx="13.5" cy="13.5" r="10.5" fill="#f01820"/><g stroke="#ffb0b0" stroke-width=".8"><path d="M13.5 4v19M4 13.5h19M7 7l13 13M20 7L7 20"/></g></svg>
<div class="t b" style="left:242.0px;top:363.0px;font-size:20px;line-height:20px;letter-spacing:-1.40px;color:#c6a667;-webkit-text-stroke:2px #000;paint-order:stroke fill;">Record</div>
<div class="t b" style="left:200.3px;top:396.0px;font-size:13.5px;line-height:13.5px;letter-spacing:-0.14px;">ontinuous</div>
<div class="t b" style="left:189.8px;top:396.0px;font-size:13.5px;line-height:13.5px;clip-path:inset(0 0 0 7.6px);">C</div>
<div class="" style="left:277.4px;top:390px;width:17px;height:17.5px;background:#b9b9b9;border:1px solid;border-color:#eee #555 #555 #eee;box-shadow:inset -2px -2px 0 #8c8c8c,inset 1px 1px 0 #d8d8d8;"></div>
<div class="t b" style="left:229.5px;top:419.0px;font-size:13.5px;line-height:13.5px;letter-spacing:0.25px;">Single</div>
<svg style="left:275px;top:415.5px" width="22" height="21" viewBox="0 0 21 20"><rect width="21" height="20" fill="#b4b4b4" stroke="#888" stroke-width=".6"/><path d="M2 7L7 2h12v11l-5 5z" fill="#7a7a7a"/><path d="M2 7L7 2h12l-5 5z" fill="#e6e6e6"/><rect x="2" y="7" width="12" height="11" fill="#b8b8b8"/><path d="M14 7l5-5v11l-5 5z" fill="#6e6e6e"/></svg>
<div class="t" style="left:157.7px;top:454.0px;font-size:10px;line-height:10px;letter-spacing:0.23px;">Record interval (s)</div>
<svg style="left:248.2px;top:447.7px" width="11" height="23" viewBox="0 0 11 23"><defs><linearGradient id="og248" x1="0" x2="1"><stop offset="0" stop-color="#f4f4f4"/><stop offset=".5" stop-color="#d8d8d8"/><stop offset="1" stop-color="#8a8a8a"/></linearGradient></defs><rect x=".5" y=".5" width="10" height="22" rx="5.0" fill="url(#og248)" stroke="#8a8a8a" stroke-width=".7"/><path d="M3.0 9.0L5.5 5.0L8.0 9.0M3.0 14.0L5.5 18.0L8.0 14.0M2 11.5H9" stroke="#555" stroke-width=".8" fill="none"/></svg>
<div class="" style="left:260.5px;top:450px;width:48px;height:20px;background:#bda060;box-shadow:inset 1px 1px 0 #d9c080,inset -1px -1px 0 #8e743c;"></div>
<div class="" style="left:263px;top:452px;width:42.5px;height:15.5px;background:#fff;"></div>
<div class="t" style="left:266.0px;top:454.0px;font-size:13px;line-height:13px;">30</div>
<div class="t b" style="left:676.4px;top:108.0px;font-size:12.6px;line-height:12.6px;letter-spacing:0.36px;">LN Off, P(12)</div>
<div class="sp" style="left:773.7px;top:103px;width:7px;height:17.3px"><i class="u"></i><i class="d"></i></div>
<div class="f" style="left:781.7px;top:103px;width:31px;height:14.3px;background:#fff;"></div>
<div class="t" style="left:785.7px;top:106.0px;font-size:11.7px;line-height:11.7px;letter-spacing:0.22px;">150</div>
<div class="t" style="left:824.4px;top:107.0px;font-size:12px;line-height:12px;">s</div>
<div class="t b" style="left:723.2px;top:131.0px;font-size:10.8px;line-height:10.8px;letter-spacing:-0.08px;">LN On</div>
<div class="f" style="left:773px;top:123.4px;width:39.5px;height:14.3px;background:#c6c6c6;"></div>
<div class="t" style="left:777.0px;top:127.0px;font-size:11.7px;line-height:11.7px;letter-spacing:0.20px;">18.225</div>
<div class="t" style="left:824.4px;top:128.0px;font-size:12px;line-height:12px;">s</div>
<div class="t b" style="left:700.7px;top:151.0px;font-size:11.4078px;line-height:11.4078px;">Loop time</div>
<div class="f" style="left:773px;top:143.3px;width:39.5px;height:14.7px;background:#c6c6c6;"></div>
<div class="t" style="left:777.0px;top:147.0px;font-size:11.7px;line-height:11.7px;letter-spacing:0.19px;">72.5</div>
<div class="t" style="left:824.4px;top:148.0px;font-size:12px;line-height:12px;">s</div>
<div class="t b" style="left:637.6px;top:169.0px;font-size:11.9137px;line-height:11.9137px;">LN  off elapsed time</div>
<div class="f" style="left:773px;top:163.7px;width:39.5px;height:14.7px;background:#c6c6c6;"></div>
<div class="t" style="left:777.0px;top:167.0px;font-size:11.7px;line-height:11.7px;letter-spacing:0.22px;">41</div>
<div class="t" style="left:824.4px;top:168.0px;font-size:12px;line-height:12px;">s</div>
<div class="t b" style="left:622.7px;top:192.0px;font-size:12.6px;line-height:12.6px;letter-spacing:0.02px;">control T grad (actual)</div>
<div class="f" style="left:771.3px;top:185.2px;width:57.5px;height:14.3px;background:#c6c6c6;"></div>
<div class="t" style="left:775.3px;top:188.0px;font-size:11.7px;line-height:11.7px;letter-spacing:0.15px;">1.553398</div>
<div class="t" style="left:850.0px;top:189.0px;font-size:12.5px;line-height:12.5px;">K/h</div>
<div class="t b" style="left:622.7px;top:212.0px;font-size:12.6px;line-height:12.6px;letter-spacing:0.08px;">control T grad (target)</div>
<div class="f" style="left:771.3px;top:205.7px;width:57.5px;height:14.8px;background:#c6c6c6;"></div>
<div class="t" style="left:775.3px;top:209.0px;font-size:11.7px;line-height:11.7px;letter-spacing:0.15px;">0.381600</div>
<div class="t" style="left:850.0px;top:210.0px;font-size:12.5px;line-height:12.5px;">K/h</div>
<div class="t b" style="left:860.3px;top:232.0px;font-size:12px;line-height:12px;letter-spacing:-0.39px;">T grads</div>
<div class="t b" style="left:698.6px;top:249.0px;font-size:12.6px;line-height:12.6px;letter-spacing:0.11px;">Pist TC#2</div>
<div class="f" style="left:772.3px;top:246.4px;width:49.6px;height:13.8px;background:#c6c6c6;"></div>
<div class="t" style="left:776.3px;top:249.0px;font-size:11.7px;line-height:11.7px;letter-spacing:0.20px;">298.51</div>
<div class="t" style="left:835.0px;top:250.0px;font-size:12.5px;line-height:12.5px;">K</div>
<div class="f" style="left:855.3px;top:248.4px;width:54.2px;height:13.8px;background:#c6c6c6;overflow:hidden;"></div>
<div class="t" style="left:859.3px;top:251.0px;font-size:11.7px;line-height:11.7px;letter-spacing:0.15px;">0.664802</div>
<div class="t" style="left:921.5px;top:252.0px;font-size:12.5px;line-height:12.5px;letter-spacing:0.25px;">K/h</div>
<div class="t b" style="left:943.5px;top:252.0px;font-size:12px;line-height:12px;letter-spacing:0.59px;">pist #2 T</div>
<div class="t b" style="left:698.6px;top:270.0px;font-size:12.6px;line-height:12.6px;letter-spacing:0.11px;">Pist TC#1</div>
<div class="f" style="left:772.3px;top:267px;width:49.6px;height:13.8px;background:#c6c6c6;"></div>
<div class="t" style="left:776.3px;top:270.0px;font-size:11.7px;line-height:11.7px;letter-spacing:0.20px;">239.77</div>
<div class="t" style="left:835.0px;top:270.0px;font-size:12.5px;line-height:12.5px;">K</div>
<div class="f" style="left:855.3px;top:269px;width:54.2px;height:13.8px;background:#c6c6c6;overflow:hidden;"></div>
<div class="t" style="left:859.3px;top:272.0px;font-size:11.7px;line-height:11.7px;letter-spacing:0.15px;">0.065822</div>
<div class="t" style="left:921.5px;top:272.0px;font-size:12.5px;line-height:12.5px;letter-spacing:0.25px;">K/h</div>
<div class="t b" style="left:943.5px;top:272.0px;font-size:12px;line-height:12px;letter-spacing:0.59px;">pist #1 T</div>
<div class="t b" style="left:733.0px;top:293.0px;font-size:10.8px;line-height:10.8px;letter-spacing:-0.00px;">Bath</div>
<div class="f" style="left:772.3px;top:288.5px;width:49.6px;height:13.8px;background:#c6c6c6;"></div>
<div class="t" style="left:776.3px;top:291.0px;font-size:11.7px;line-height:11.7px;letter-spacing:0.20px;">239.33</div>
<div class="t" style="left:835.0px;top:292.0px;font-size:12.5px;line-height:12.5px;">K</div>
<div class="f" style="left:855.3px;top:288.5px;width:54.2px;height:13.8px;background:#c6c6c6;overflow:hidden;"></div>
<div class="t" style="left:859.3px;top:291.0px;font-size:11.7px;line-height:11.7px;letter-spacing:0.15px;">2.047063</div>
<div class="t" style="left:921.5px;top:292.0px;font-size:12.5px;line-height:12.5px;letter-spacing:0.25px;">K/h</div>
<div class="t b" style="left:943.5px;top:292.0px;font-size:12px;line-height:12px;letter-spacing:0.30px;">bath T gr</div>
<div class="t b" style="left:705.2px;top:312.0px;font-size:11.7949px;line-height:11.7949px;letter-spacing:0.00px;">Al Jacket</div>
<div class="f" style="left:772.3px;top:308.8px;width:49.6px;height:13.8px;background:#c6c6c6;"></div>
<div class="t" style="left:776.3px;top:312.0px;font-size:11.7px;line-height:11.7px;letter-spacing:0.20px;">240.69</div>
<div class="t" style="left:835.0px;top:312.0px;font-size:12.5px;line-height:12.5px;">K</div>
<div class="f" style="left:855.3px;top:308.3px;width:54.2px;height:13.8px;background:#c6c6c6;overflow:hidden;"></div>
<div class="t" style="left:859.3px;top:311.0px;font-size:11.7px;line-height:11.7px;letter-spacing:0.15px;">1.698206</div>
<div class="t" style="left:921.5px;top:312.0px;font-size:12.5px;line-height:12.5px;letter-spacing:0.25px;">K/h</div>
<div class="t b" style="left:943.5px;top:312.0px;font-size:12px;line-height:12px;letter-spacing:0.29px;">Al jacket</div>
<div class="t" style="left:658.0px;top:336.0px;font-size:12px;line-height:12px;letter-spacing:-0.25px;">New tank</div>
<div class="t" style="left:658.0px;top:349.0px;font-size:12px;line-height:12px;letter-spacing:0.18px;">multiplier</div>
<svg style="left:653.6px;top:367.7px" width="12" height="22" viewBox="0 0 12 22"><defs><linearGradient id="og653" x1="0" x2="1"><stop offset="0" stop-color="#f4f4f4"/><stop offset=".5" stop-color="#d8d8d8"/><stop offset="1" stop-color="#8a8a8a"/></linearGradient></defs><rect x=".5" y=".5" width="11" height="21" rx="5.5" fill="url(#og653)" stroke="#8a8a8a" stroke-width=".7"/><path d="M3.5 8.5L6.0 4.5L8.5 8.5M3.5 13.5L6.0 17.5L8.5 13.5M2 11.0H10" stroke="#555" stroke-width=".8" fill="none"/></svg>
<div class="" style="left:666.5px;top:370px;width:16px;height:19.5px;background:#bda060;box-shadow:inset 1px 1px 0 #d9c080,inset -1px -1px 0 #8e743c;"></div>
<div class="" style="left:668.8px;top:372px;width:12px;height:15.5px;background:#fff;"></div>
<div class="t" style="left:671.5px;top:374.0px;font-size:12.5px;line-height:12.5px;">1</div>
<div class="" style="left:727.3px;top:338px;width:184.5px;height:69.5px;border:1px dashed #333;"></div>
<div class="" style="left:741.7px;top:350.4px;width:50px;height:31px;background:#5cf034;border:1px solid;border-color:#f4e888 #6a9a22 #6a9a22 #f4e888;"></div>
<div class="t b" style="left:743.0px;top:354.0px;font-size:12.5px;line-height:12.5px;letter-spacing:0.45px;">150-sec</div>
<div class="t b" style="left:757.5px;top:368.0px;font-size:12.5px;line-height:12.5px;letter-spacing:-0.39px;">Loop</div>
<svg style="left:807.9px;top:346.8px" width="30" height="33" viewBox="0 0 30 33"><circle cx="15" cy="26" r="5.5" fill="#b0b0b0" stroke="#999" stroke-width=".5"/><path d="M0 3 L30 3 L21 24.5 L9 24.5z" fill="#585858"/><path d="M0 3 L3 3 L11 24.5 L9 24.5z" fill="#6c6c6c"/><path d="M1.500 0h27l1.500 3H0z" fill="#8a8a8a"/></svg>
<div class="t" style="left:809.7px;top:385.0px;font-size:13px;line-height:13px;letter-spacing:0.07px;">Reset</div>
<svg style="left:856px;top:350px" width="27" height="27" viewBox="0 0 27 27"><circle cx="13.5" cy="13.5" r="12.5" fill="#d8d8d8" stroke="#777"/><circle cx="13.5" cy="13.5" r="10" fill="#a8a8a8" stroke="#888" stroke-width=".6"/></svg>
<div class="t b" style="left:632.6px;top:415.0px;font-size:11px;line-height:11px;letter-spacing:0.53px;transform:scaleY(.9);">34970 read delay (ms)</div>
<div class="sp" style="left:765.5px;top:411.8px;width:7px;height:16.6px"><i class="u"></i><i class="d"></i></div>
<div class="f" style="left:773.5px;top:411.8px;width:46.5px;height:13.6px;background:#fff;"></div>
<div class="t" style="left:777.5px;top:415.0px;font-size:11.7px;line-height:11.7px;letter-spacing:0.22px;">1500</div>
<div class="t b" style="left:700.2px;top:438.0px;font-size:13.2px;line-height:13.2px;letter-spacing:-0.00px;">Display Control</div>
<div class="t b" style="left:852.3px;top:443.0px;font-size:12px;line-height:12px;letter-spacing:-0.14px;">last reading</div>
<div class="frame" style="left:732px;top:455.5px;width:28px;height:190px;background:#9fdcff;"></div>
<div class="t b" style="left:630.4px;top:472.0px;font-size:11.8px;line-height:11.8px;letter-spacing:-0.16px;">Int stress gauge</div>
<div class="t b" style="left:634.2px;top:494.0px;font-size:11.8px;line-height:11.8px;letter-spacing:-0.29px;">Ext force gauge</div>
<div class="t b" style="left:639.4px;top:514.0px;font-size:11.8px;line-height:11.8px;letter-spacing:-0.31px;">Intensifier disp</div>
<div class="t b" style="left:658.4px;top:537.0px;font-size:11.8px;line-height:11.8px;letter-spacing:-0.33px;">Piston disp</div>
<div class="t b" style="left:635.4px;top:558.0px;font-size:11.8px;line-height:11.8px;letter-spacing:-0.02px;">1/2 Piston disp</div>
<div class="t b" style="left:701.7px;top:604.0px;font-size:11.8px;line-height:11.8px;letter-spacing:0.10px;">6 v</div>
<div class="t b" style="left:659.7px;top:626.0px;font-size:11.8px;line-height:11.8px;letter-spacing:-0.36px;">Heise gage</div>
<div class="" style="left:739.7px;top:468.9px;width:13px;height:12.5px;background:#b9b9b9;border:1px solid;border-color:#eee #555 #555 #eee;box-shadow:inset -2px -2px 0 #8c8c8c,inset 1px 1px 0 #d8d8d8;"></div>
<div class="" style="left:739.7px;top:491px;width:13px;height:12.5px;background:#f01010;border:1px solid;border-color:#f8d000 #a06000 #a06000 #f8d000;box-shadow:inset -2px -2px 0 #a00000,inset 1px 1px 0 #ff8080;"></div>
<div class="" style="left:739.7px;top:513px;width:13px;height:12.5px;background:#b9b9b9;border:1px solid;border-color:#eee #555 #555 #eee;box-shadow:inset -2px -2px 0 #8c8c8c,inset 1px 1px 0 #d8d8d8;"></div>
<div class="" style="left:739.7px;top:535px;width:13px;height:12.5px;background:#b9b9b9;border:1px solid;border-color:#eee #555 #555 #eee;box-shadow:inset -2px -2px 0 #8c8c8c,inset 1px 1px 0 #d8d8d8;"></div>
<svg style="left:739.5px;top:556.5px" width="15" height="15" viewBox="0 0 21 20"><rect width="21" height="20" fill="#b4b4b4" stroke="#888" stroke-width=".6"/><path d="M2 7L7 2h12v11l-5 5z" fill="#7a7a7a"/><path d="M2 7L7 2h12l-5 5z" fill="#e6e6e6"/><rect x="2" y="7" width="12" height="11" fill="#b8b8b8"/><path d="M14 7l5-5v11l-5 5z" fill="#6e6e6e"/></svg>
<svg style="left:739.5px;top:578.7px" width="15" height="15" viewBox="0 0 21 20"><rect width="21" height="20" fill="#b4b4b4" stroke="#888" stroke-width=".6"/><path d="M2 7L7 2h12v11l-5 5z" fill="#7a7a7a"/><path d="M2 7L7 2h12l-5 5z" fill="#e6e6e6"/><rect x="2" y="7" width="12" height="11" fill="#b8b8b8"/><path d="M14 7l5-5v11l-5 5z" fill="#6e6e6e"/></svg>
<svg style="left:739.5px;top:601px" width="15" height="15" viewBox="0 0 21 20"><rect width="21" height="20" fill="#b4b4b4" stroke="#888" stroke-width=".6"/><path d="M2 7L7 2h12v11l-5 5z" fill="#7a7a7a"/><path d="M2 7L7 2h12l-5 5z" fill="#e6e6e6"/><rect x="2" y="7" width="12" height="11" fill="#b8b8b8"/><path d="M14 7l5-5v11l-5 5z" fill="#6e6e6e"/></svg>
<div class="" style="left:739.7px;top:622.8px;width:13px;height:12.5px;background:#b9b9b9;border:1px solid;border-color:#eee #555 #555 #eee;box-shadow:inset -2px -2px 0 #8c8c8c,inset 1px 1px 0 #d8d8d8;"></div>
<div class="f" style="left:764.7px;top:469.8px;width:69.3px;height:14.2px;background:#c6c6c6;"></div>
<div class="t" style="left:768.7px;top:473.0px;font-size:11.7px;line-height:11.7px;letter-spacing:0.21px;">0.026400</div>
<div class="t" style="left:842.5px;top:474.0px;font-size:11.5px;line-height:11.5px;">V</div>
<div class="f" style="left:764.7px;top:492px;width:69.3px;height:14.3px;background:#c6c6c6;border-color:#e02010;box-shadow:inset 1px 1px 0 #c01008,inset -1px -1px 0 #f0a090;"></div>
<div class="t" style="left:768.7px;top:495.0px;font-size:11.7px;line-height:11.7px;letter-spacing:0.20px;">-0.002041</div>
<div class="t" style="left:842.5px;top:497.0px;font-size:11.5px;line-height:11.5px;">V</div>
<div class="f" style="left:764.7px;top:512.4px;width:69.3px;height:13.8px;background:#c6c6c6;"></div>
<div class="t" style="left:768.7px;top:515.0px;font-size:11.7px;line-height:11.7px;letter-spacing:0.19px;">-2.0166</div>
<div class="t" style="left:842.5px;top:517.0px;font-size:11.5px;line-height:11.5px;">V</div>
<div class="f" style="left:764.7px;top:535px;width:69.3px;height:14px;background:#c6c6c6;"></div>
<div class="t" style="left:768.7px;top:538.0px;font-size:11.7px;line-height:11.7px;letter-spacing:0.20px;">0.9639</div>
<div class="t" style="left:842.5px;top:539.0px;font-size:11.5px;line-height:11.5px;">V</div>
<div class="f" style="left:764.7px;top:555.9px;width:69.3px;height:13.8px;background:#c6c6c6;"></div>
<div class="t" style="left:768.7px;top:559.0px;font-size:11.7px;line-height:11.7px;letter-spacing:0.20px;">0.0000</div>
<div class="t" style="left:842.5px;top:560.0px;font-size:11.5px;line-height:11.5px;">V</div>
<div class="f" style="left:764.7px;top:601.5px;width:67px;height:14.3px;background:#c6c6c6;"></div>
<div class="t" style="left:768.7px;top:605.0px;font-size:11.7px;line-height:11.7px;letter-spacing:0.20px;">0.0000</div>
<div class="t" style="left:842.5px;top:606.0px;font-size:11.5px;line-height:11.5px;">V</div>
<div class="f" style="left:764.7px;top:623.4px;width:67px;height:14.6px;background:#c6c6c6;"></div>
<div class="t" style="left:768.7px;top:627.0px;font-size:11.7px;line-height:11.7px;letter-spacing:0.21px;">2.510377</div>
<div class="t" style="left:842.5px;top:628.0px;font-size:11.5px;line-height:11.5px;">V</div>
<div class="f" style="left:859.9px;top:468.9px;width:52.6px;height:14.6px;background:#c6c6c6;overflow:hidden;"></div>
<div class="t" style="left:863.9px;top:472.0px;font-size:11.7px;line-height:11.7px;letter-spacing:0.15px;">0.026400</div>
<div class="f" style="left:859.9px;top:535px;width:52.6px;height:14px;background:#c6c6c6;"></div>
<div class="t" style="left:863.9px;top:538.0px;font-size:11.7px;line-height:11.7px;letter-spacing:0.15px;">0.963909</div>
<div class="" style="left:995px;top:79px;width:15px;height:583px;background:linear-gradient(90deg,#c4c4c4,#e4e4e4 30%,#fff 65%,#fafafa 90%,#e8e8e8);border-left:1px solid #aaa;"></div>
<div class="" style="left:996.2px;top:85px;width:12.6px;height:335px;border-radius:7px;background:linear-gradient(90deg,#2a40c8 0,#3a58d8 8%,#a4c4f6 20%,#9cc0f6 35%,#5c92f0 48%,#6aa4f4 58%,#a8e0ff 72%,#b4ecff 88%,#5a6c98 100%);box-shadow:inset 0 1px 1.500px #2a40c8,inset 0 -1px 1.500px #2a40c8;"></div>
<svg style="left:997px;top:628px" width="13" height="34" viewBox="0 0 13 34"><path d="M6.5 12L3 18h7z" fill="#444"/><path d="M0 24h13" stroke="#aaa"/><path d="M3 29h7" stroke="#444" stroke-width="2"/></svg>
<!-- Area correction -->
<div class="win" style="left:615px;top:657px;width:450px;height:290px;background:#b3b3b3;border-radius:5px 0 0 0;"></div>
<div class="tb" style="left:615px;top:657px;width:450px;height:21px;border-radius:5px 0 0 0;"></div>
<div class="tl" style="left:625px;top:662px;width:12px;height:12px;"></div>
<div class="tl" style="left:646px;top:662px;width:12px;height:12px;"></div>
<div class="tl" style="left:667px;top:662px;width:12px;height:12px;"></div>
<div class="t" style="left:810.4px;top:661.0px;font-size:14px;line-height:14px;letter-spacing:0.07px;color:#3c3c3c;">Area correction</div>
<div class="tool" style="left:615px;top:679px;width:450px;height:34px;"></div>
<svg style="left:671.500px;top:690px" width="12.500" height="13" viewBox="0 0 14 13"><path d="M1.500 4.500h5V1l6 5.500-6 5.500V8.500h-5z" fill="#fff" stroke="#000" stroke-width="1.500"/></svg>
<div class="" style="left:714.5px;top:686px;width:20px;height:20px;background:#c8c8c8;border:1px solid #8a8a8a;"></div>
<svg style="left:718.500px;top:690px" width="14" height="14" viewBox="0 0 17 17"><path d="M5 1h7l4 4v7l-4 4H5l-4-4V5z" fill="#e06068" stroke="#a04048" stroke-width=".8"/></svg>
<div class="btn" style="left:735.5px;top:686px;width:20px;height:20px;"></div>
<div class="" style="left:741px;top:690.5px;width:3.5px;height:11px;background:#000"></div>
<div class="" style="left:747px;top:690.5px;width:3.5px;height:11px;background:#000"></div>
<div class="btn" style="left:1041px;top:686px;width:20px;height:20px;"></div>
<div class="t b" style="left:1045.8px;top:688.0px;font-size:17px;line-height:17px;color:#e8d000;text-shadow:1px 0 0 #000,-1px 0 0 #000,0 1px 0 #000,0 -1px 0 #000;">?</div>
<div class="" style="left:615px;top:932px;width:450px;height:15px;background:linear-gradient(#e8e8e8,#fff 40%,#fff 80%,#e0e0e0);"></div>
<div class="lb" style="left:659.6px;top:738.2px;width:93.4px;height:11.5px"></div>
<div class="t" style="left:662.6px;top:740.0px;font-size:12.5px;line-height:12.5px;letter-spacing:-0.24px;">Original set point</div>
<div class="sp" style="left:652px;top:755.5px;width:7px;height:17px"><i class="u"></i><i class="d"></i></div>
<div class="f" style="left:660.4px;top:755px;width:56.6px;height:14.7px;background:#c6c6c6;"></div>
<div class="t" style="left:664.4px;top:758.0px;font-size:11.7px;line-height:11.7px;letter-spacing:0.15px;">0.014850</div>
<div class="lb" style="left:665.5px;top:780.5px;width:122.3px;height:11.5px"></div>
<div class="t" style="left:668.5px;top:782.0px;font-size:12.5px;line-height:12.5px;letter-spacing:-0.28px;">First piston contact (V)</div>
<div class="sp" style="left:659px;top:797.5px;width:7px;height:16.5px"><i class="u"></i><i class="d"></i></div>
<div class="f" style="left:666.7px;top:797.3px;width:44.5px;height:13.7px;background:#c6c6c6;"></div>
<div class="t" style="left:670.7px;top:800.0px;font-size:11.7px;line-height:11.7px;letter-spacing:0.20px;">0.8713</div>
<div class="lb" style="left:659px;top:821.3px;width:76.3px;height:11px"></div>
<div class="t" style="left:662.0px;top:823.0px;font-size:12.5px;line-height:12.5px;letter-spacing:-0.60px;">Piston disp (V)</div>
<div class="f" style="left:659.6px;top:838.5px;width:45px;height:13.8px;background:#c6c6c6;"></div>
<div class="t" style="left:663.6px;top:841.0px;font-size:11.7px;line-height:11.7px;letter-spacing:0.20px;">0.9639</div>
<div class="lb" style="left:668.8px;top:859.5px;width:134.6px;height:11.5px"></div>
<div class="t" style="left:671.8px;top:861.0px;font-size:12.5px;line-height:12.5px;letter-spacing:-0.39px;">Starting sample length (&quot;)</div>
<div class="sp" style="left:661px;top:876.5px;width:7px;height:16.5px"><i class="u"></i><i class="d"></i></div>
<div class="f" style="left:669.7px;top:876.3px;width:44.3px;height:13.7px;background:#c6c6c6;"></div>
<div class="t" style="left:673.7px;top:879.0px;font-size:11.7px;line-height:11.7px;letter-spacing:0.20px;">2.340</div>
<div class="lb" style="left:828.5px;top:779.2px;width:38.7px;height:11.1px"></div>
<div class="t" style="left:831.5px;top:780.0px;font-size:12.5px;line-height:12.5px;letter-spacing:-0.56px;">disp (&quot;)</div>
<div class="f" style="left:828.5px;top:796.5px;width:55px;height:13.8px;background:#c6c6c6;"></div>
<div class="t" style="left:832.5px;top:799.0px;font-size:11.7px;line-height:11.7px;letter-spacing:0.15px;">0.015929</div>
<div class="lb" style="left:828.5px;top:816.2px;width:31.5px;height:11.5px"></div>
<div class="t" style="left:831.5px;top:818.0px;font-size:12.5px;line-height:12.5px;letter-spacing:-0.51px;">strain</div>
<div class="f" style="left:828.5px;top:833px;width:55px;height:14.7px;background:#c6c6c6;"></div>
<div class="t" style="left:832.5px;top:836.0px;font-size:11.7px;line-height:11.7px;letter-spacing:0.15px;">0.006807</div>
<div class="lb" style="left:941px;top:797.3px;width:92.2px;height:11.5px"></div>
<div class="t" style="left:944.0px;top:799.0px;font-size:12.5px;line-height:12.5px;letter-spacing:-0.25px;">Current set point</div>
<div class="f" style="left:941px;top:815px;width:53.4px;height:13.8px;background:#c6c6c6;"></div>
<div class="t" style="left:945.0px;top:818.0px;font-size:11.7px;line-height:11.7px;letter-spacing:0.02px;">0.014952</div>
<!-- Motor driver -->
<div class="win" style="left:27px;top:474px;width:588px;height:580px;background:#b3b3b3;border-radius:5px 5px 0 0;"></div>
<div class="tb" style="left:27px;top:474px;width:588px;height:21px;"></div>
<div class="tl" style="left:35.5px;top:479px;width:12px;height:12px;"></div>
<div class="tl" style="left:57px;top:479px;width:12px;height:12px;"></div>
<div class="tl" style="left:78.5px;top:479px;width:12px;height:12px;"></div>
<div class="t" style="left:228.5px;top:478.0px;font-size:14px;line-height:14px;letter-spacing:0.27px;color:#3c3c3c;">Motor driver 10 to 1 v9.0.2.vi</div>
<div class="tool" style="left:27px;top:496px;width:588px;height:34px;"></div>
<svg style="left:82.500px;top:507px" width="12.500" height="13" viewBox="0 0 14 13"><path d="M1.500 4.500h5V1l6 5.500-6 5.500V8.500h-5z" fill="#fff" stroke="#000" stroke-width="1.500"/></svg>
<div class="btn" style="left:146.3px;top:503.4px;width:20px;height:18.5px;"></div>
<div class="" style="left:152px;top:508px;width:3.5px;height:10.5px;background:#000"></div>
<div class="" style="left:158px;top:508px;width:3.5px;height:10.5px;background:#000"></div>
<div class="btn" style="left:556.3px;top:503.4px;width:20px;height:18.5px;"></div>
<div class="t b" style="left:562.1px;top:505.0px;font-size:16px;line-height:16px;color:#e8d000;text-shadow:1px 0 0 #000,-1px 0 0 #000,0 1px 0 #000,0 -1px 0 #000;">?</div>
<div class="" style="left:580.5px;top:496px;width:34px;height:34.5px;background:#fff;border-left:1px solid #000;border-bottom:1px solid #000;"></div>
<div class="" style="left:582.5px;top:497px;width:29.5px;height:30.5px;background:#fff;border:1.5px solid #000;"></div>
<div class="" style="left:588px;top:500px;width:16px;height:5.5px;border:1px solid #000;background:#fff;"></div>
<div class="" style="left:605px;top:502px;width:4px;height:3.5px;background:#000;"></div>
<div class="t" style="left:585.5px;top:508.0px;font-size:10.5px;line-height:10.5px;letter-spacing:-0.17px;">motor</div>
<div class="t" style="left:588.5px;top:518.0px;font-size:10.5px;line-height:10.5px;letter-spacing:-0.11px;">10:1</div>
<div class="" style="left:599px;top:531px;width:15px;height:507px;background:linear-gradient(90deg,#c4c4c4,#e4e4e4 30%,#fff 65%,#fafafa 90%,#e8e8e8);border-left:1px solid #aaa;"></div>
<div class="" style="left:600.2px;top:590px;width:12.6px;height:414px;border-radius:7px;background:linear-gradient(90deg,#2a40c8 0,#3a58d8 8%,#a4c4f6 20%,#9cc0f6 35%,#5c92f0 48%,#6aa4f4 58%,#a8e0ff 72%,#b4ecff 88%,#5a6c98 100%);box-shadow:inset 0 1px 1.500px #2a40c8,inset 0 -1px 1.500px #2a40c8;"></div>
<svg style="left:601px;top:1004px" width="14" height="34" viewBox="0 0 14 34"><path d="M7 5L3 12h8z" fill="#555"/><path d="M0 17h14" stroke="#bbb"/><path d="M7 29L3 22h8z" fill="#555"/></svg>
<div class="" style="left:27px;top:1038px;width:573px;height:12px;background:linear-gradient(180deg,#c8c8c8,#fff 35%,#fff 70%,#ddd);border-top:1px solid #999;"></div>
<div class="" style="left:33px;top:1039px;width:514px;height:12px;border-radius:7px;background:linear-gradient(180deg,#2a40c8 0,#3a58d8 8%,#a4c4f6 20%,#9cc0f6 35%,#5c92f0 48%,#6aa4f4 58%,#a8e0ff 72%,#b4ecff 88%,#5a6c98 100%);box-shadow:inset 0 1px 1.500px #2a40c8,inset 0 -1px 1.500px #2a40c8;"></div>
<svg style="left:565px;top:1039px" width="50" height="12" viewBox="0 0 50 12"><rect width="50" height="12" fill="#f4f4f4"/><path d="M0 0v12M18 0v12M35 0v12" stroke="#bbb"/><path d="M6 6l7-4v8zM30 6l-7-4v8z" fill="#555"/><path d="M38 11L48 1M42 11l6-6M46 11l2-2" stroke="#999"/></svg>
<div class="t b" style="left:271.8px;top:527.0px;font-size:21px;line-height:21px;color:#fa0012;transform:scaleX(.82);transform-origin:0 0;">^</div>
<div class="t b" style="left:283.0px;top:534.0px;font-size:12.4px;line-height:12.4px;letter-spacing:-0.53px;color:#fa0012;">SEE NOTE</div>
<div class="" style="left:349.4px;top:536.3px;width:142.6px;height:19.4px;background:#a8a8a8;box-shadow:inset 1px 1px 0 #d8d8d8,inset -1px -1px 0 #6c6c6c;"></div>
<div class="t m b" style="left:351.0px;top:539.0px;font-size:8px;line-height:8px;">I</div>
<div class="t m b" style="left:354.5px;top:547.0px;font-size:8px;line-height:8px;">0</div>
<svg style="left:350px;top:538px" width="11" height="16"><path d="M9 2L2 14" stroke="#000" stroke-width="1"/></svg>
<div class="f" style="left:360px;top:538px;width:111px;height:13px;background:#c2c2c2;"></div>
<div class="t" style="left:362.2px;top:540.0px;font-size:12.5px;line-height:12.5px;letter-spacing:-1.14px;">ASRL1::INSTR</div>
<div class="" style="left:474px;top:538.5px;width:15px;height:14px;background:#b4b4b4;border:1px solid;border-color:#e4e4e4 #000 #000 #e4e4e4;box-shadow:1px 1px 0 #333;"></div>
<svg style="left:477px;top:543px" width="10" height="7"><path d="M0 0h10L5 6z" fill="#000"/></svg>
<div class="t b" style="left:99.3px;top:565.0px;font-size:13px;line-height:13px;letter-spacing:0.12px;">Constant load only.</div>
<div class="t b" style="left:99.3px;top:579.0px;font-size:13px;line-height:13px;letter-spacing:-0.07px;">&quot;Mode&quot; menu disabled</div>
<div class="lb" style="left:325px;top:567px;width:68.6px;height:11.5px"></div>
<div class="t" style="left:328.0px;top:568.0px;font-size:12.5px;line-height:12.5px;letter-spacing:-0.27px;">Active string</div>
<div class="lb" style="left:409.3px;top:564.8px;width:58.4px;height:11.7px"></div>
<div class="t" style="left:412.3px;top:566.0px;font-size:12.5px;line-height:12.5px;letter-spacing:-0.49px;">Sent string</div>
<div class="lb" style="left:480.3px;top:566px;width:61px;height:11.6px"></div>
<div class="t" style="left:483.3px;top:568.0px;font-size:12.5px;line-height:12.5px;letter-spacing:-0.82px;">Read String</div>
<div class="" style="left:326.3px;top:584.2px;width:59.6px;height:139.8px;background:#b3b3b3;border:1px solid;border-color:#e8e8e8 #777 #777 #e8e8e8;"></div>
<div class="" style="left:330.3px;top:588.2px;width:51.6px;height:131.8px;background:#c8c8c8;border:1px solid;border-color:#6c6c6c #ececec #ececec #6c6c6c;"></div>
<div class="" style="left:400.5px;top:584.2px;width:60px;height:139.8px;background:#b3b3b3;border:1px solid;border-color:#e8e8e8 #777 #777 #e8e8e8;"></div>
<div class="" style="left:404.5px;top:588.2px;width:52px;height:131.8px;background:#c8c8c8;border:1px solid;border-color:#6c6c6c #ececec #ececec #6c6c6c;"></div>
<div class="" style="left:474.8px;top:586.2px;width:59px;height:140.8px;background:#b3b3b3;border:1px solid;border-color:#e8e8e8 #777 #777 #e8e8e8;"></div>
<div class="" style="left:478.8px;top:590.2px;width:51px;height:132.8px;background:#c8c8c8;border:1px solid;border-color:#6c6c6c #ececec #ececec #6c6c6c;"></div>
<div class="t" style="left:333.0px;top:587.0px;font-size:12px;line-height:12px;">LD3</div>
<div class="t" style="left:333.0px;top:600.0px;font-size:12px;line-height:12px;">MC</div>
<div class="t" style="left:333.0px;top:613.0px;font-size:12px;line-height:12px;">A10</div>
<div class="t" style="left:333.0px;top:626.0px;font-size:12px;line-height:12px;">MR200</div>
<div class="t" style="left:333.0px;top:639.0px;font-size:12px;line-height:12px;">H-</div>
<div class="t" style="left:333.0px;top:652.0px;font-size:12px;line-height:12px;">V0.02</div>
<div class="t" style="left:333.0px;top:665.0px;font-size:12px;line-height:12px;">G</div>
<div class="frame" style="left:37.5px;top:621.4px;width:273.2px;height:132.4px;background:#b3b3b3;"></div>
<div class="lb" style="left:60.6px;top:631.4px;width:30.6px;height:11.4px"></div>
<div class="t" style="left:63.6px;top:633.0px;font-size:12.5px;line-height:12.5px;letter-spacing:-0.66px;">set pt</div>
<div class="sp" style="left:95.4px;top:629.5px;width:7px;height:16.5px"><i class="u"></i><i class="d"></i></div>
<div class="f" style="left:103.4px;top:629.4px;width:62.3px;height:13.2px;background:#c6c6c6;"></div>
<div class="t" style="left:107.4px;top:632.0px;font-size:11.7px;line-height:11.7px;letter-spacing:0.15px;">0.014850</div>
<div class="lb" style="left:42.7px;top:651.3px;width:59.3px;height:11px"></div>
<div class="t" style="left:45.7px;top:653.0px;font-size:12.5px;line-height:12.5px;letter-spacing:-0.73px;">gauge zero</div>
<div class="sp" style="left:105.4px;top:649.5px;width:7px;height:16.5px"><i class="u"></i><i class="d"></i></div>
<div class="f" style="left:113.1px;top:649.3px;width:52.6px;height:13.9px;background:#c6c6c6;overflow:hidden;"></div>
<div class="t" style="left:117.1px;top:652.0px;font-size:11.7px;line-height:11.7px;letter-spacing:0.26px;">0.011450</div>
<div class="sp" style="left:173px;top:635px;width:7px;height:16px"><i class="u"></i><i class="d"></i></div>
<div class="f" style="left:180.4px;top:635px;width:56.9px;height:12.8px;background:#c6c6c6;"></div>
<div class="t" style="left:184.4px;top:637.0px;font-size:11.7px;line-height:11.7px;letter-spacing:0.20px;">50.00</div>
<div class="sp" style="left:173px;top:654.2px;width:7px;height:16px"><i class="u"></i><i class="d"></i></div>
<div class="f" style="left:180.4px;top:654.2px;width:56.9px;height:12.7px;background:#c6c6c6;"></div>
<div class="t" style="left:184.4px;top:657.0px;font-size:11.7px;line-height:11.7px;letter-spacing:0.15px;">0.000030</div>
<div class="sp" style="left:173px;top:673.3px;width:7px;height:16px"><i class="u"></i><i class="d"></i></div>
<div class="f" style="left:180.4px;top:673.3px;width:56.9px;height:12.7px;background:#c6c6c6;"></div>
<div class="t" style="left:184.4px;top:676.0px;font-size:11.7px;line-height:11.7px;letter-spacing:0.15px;">0.500000</div>
<div class="sp" style="left:173px;top:692.7px;width:7px;height:16px"><i class="u"></i><i class="d"></i></div>
<div class="f" style="left:180.4px;top:692.7px;width:56.9px;height:13.3px;background:#c6c6c6;"></div>
<div class="t" style="left:184.4px;top:695.0px;font-size:11.7px;line-height:11.7px;letter-spacing:0.15px;">0.000000</div>
<div class="sp" style="left:173px;top:711.2px;width:7px;height:16px"><i class="u"></i><i class="d"></i></div>
<div class="f" style="left:180.4px;top:711.2px;width:46.1px;height:12.8px;background:#c6c6c6;"></div>
<div class="t" style="left:184.4px;top:714.0px;font-size:11.7px;line-height:11.7px;letter-spacing:0.19px;">0.10</div>
<div class="sp" style="left:130.2px;top:730px;width:7px;height:16px"><i class="u"></i><i class="d"></i></div>
<div class="f" style="left:138.2px;top:729.8px;width:45.5px;height:13.2px;background:#c6c6c6;"></div>
<div class="t" style="left:142.2px;top:732.0px;font-size:11.7px;line-height:11.7px;letter-spacing:0.20px;">0.8713</div>
<div class="lb" style="left:243.7px;top:636.2px;width:25.1px;height:11.1px"></div>
<div class="t" style="left:246.7px;top:637.0px;font-size:12.5px;line-height:12.5px;letter-spacing:-1.33px;">Prop</div>
<div class="lb" style="left:243.7px;top:657px;width:18px;height:10.3px"></div>
<div class="t" style="left:246.7px;top:658.0px;font-size:12.5px;line-height:12.5px;letter-spacing:0.03px;">Int</div>
<div class="lb" style="left:243.7px;top:675px;width:62.2px;height:12px"></div>
<div class="lb" style="left:243.7px;top:695px;width:62.2px;height:11.4px"></div>
<div class="t" style="left:246.7px;top:676.0px;font-size:12.5px;line-height:12.5px;letter-spacing:0.02px;clip-path:inset(0 7px 0 0);">hi reset limit</div>
<div class="t" style="left:246.7px;top:696.0px;font-size:12.5px;line-height:12.5px;letter-spacing:0.02px;clip-path:inset(0 7px 0 0);">lo reset limit</div>
<div class="lb" style="left:232.9px;top:714px;width:50.1px;height:11px"></div>
<div class="t" style="left:235.9px;top:715.0px;font-size:12.5px;line-height:12.5px;letter-spacing:-0.29px;">total limit</div>
<div class="lb" style="left:190.4px;top:732.6px;width:102.1px;height:10.8px"></div>
<div class="t" style="left:193.4px;top:734.0px;font-size:12.5px;line-height:12.5px;letter-spacing:-0.27px;">1st pist contact (V)</div>
<svg style="left:116px;top:753px" width="56" height="46" viewBox="0 0 56 46"><ellipse cx="28" cy="23" rx="26" ry="21.3" fill="#d6d2fc" stroke="#222" stroke-width="1.3"/><path d="M8 36a26 21.300 0 0 0 40 0" fill="none" stroke="#8a88b8" stroke-width="1.5"/></svg>
<div class="t b" style="left:121.7px;top:768.0px;font-size:17px;line-height:17px;letter-spacing:-0.49px;color:#fa0012;">STOP</div>
<div class="" style="left:175.3px;top:760.3px;width:15.5px;height:16px;background:#000;border:1px solid #777;"></div>
<svg style="left:176px;top:761px" width="16" height="16"><g stroke="#ddd" stroke-width=".7"><path d="M8 1v14M1 8h14M3 3l10 10M13 3L3 13"/></g></svg>
<div class="t b" style="left:199.5px;top:763.0px;font-size:12.5px;line-height:12.5px;letter-spacing:-0.32px;">Motor running</div>
<div class="f" style="left:322px;top:734px;width:95.6px;height:14px;background:#c6c6c6;"></div>
<div class="t" style="left:425.4px;top:739.0px;font-size:12px;line-height:12px;letter-spacing:-0.01px;">current selected displacement ra</div>
<div class="t" style="left:283.2px;top:755.0px;font-size:12px;line-height:12px;letter-spacing:0.05px;">internal force gauge (v)</div>
<div class="f" style="left:289.7px;top:769.5px;width:55.8px;height:13.8px;background:#c6c6c6;"></div>
<div class="t" style="left:293.7px;top:772.0px;font-size:11.7px;line-height:11.7px;letter-spacing:0.15px;">0.026420</div>
<div class="f" style="left:289.7px;top:788.9px;width:55.8px;height:13.1px;background:#c6c6c6;"></div>
<div class="t" style="left:293.7px;top:791.0px;font-size:11.7px;line-height:11.7px;letter-spacing:0.15px;">0.023627</div>
<div class="f" style="left:289.7px;top:807.3px;width:55.8px;height:13.2px;background:#c6c6c6;"></div>
<div class="t" style="left:293.7px;top:810.0px;font-size:11.7px;line-height:11.7px;letter-spacing:0.15px;">0.014952</div>
<div class="f" style="left:289.7px;top:825.4px;width:55.8px;height:13.2px;background:#c6c6c6;"></div>
<div class="t" style="left:293.7px;top:828.0px;font-size:11.7px;line-height:11.7px;letter-spacing:0.15px;">0.026402</div>
<div class="" style="left:356.6px;top:771.7px;width:15px;height:13px;background:#b9b9b9;border:1px solid;border-color:#eee #555 #555 #eee;box-shadow:inset -2px -2px 0 #8c8c8c,inset 1px 1px 0 #d8d8d8;"></div>
<div class="t b" style="left:377.0px;top:773.0px;font-size:11.5px;line-height:11.5px;letter-spacing:-0.75px;">smooth</div>
<div class="" style="left:427px;top:767px;width:40px;height:18px;background:linear-gradient(135deg,#d4d4d4,#b0b0b0);border:1px solid;border-color:#f0f0f0 #666 #666 #f0f0f0;"></div>
<div class="t" style="left:436.0px;top:769.0px;font-size:16px;line-height:16px;">3</div>
<svg style="left:452px;top:773px" width="14" height="9"><path d="M0 0h14L7 9z" fill="#000"/></svg>
<div class="t b" style="left:471.3px;top:771.0px;font-size:12.5px;line-height:12.5px;letter-spacing:-0.09px;"># of pts</div>
<div class="t" style="left:358.5px;top:791.0px;font-size:12px;line-height:12px;letter-spacing:0.16px;">current reset</div>
<div class="lb" style="left:356.6px;top:809.2px;width:73.3px;height:11px"></div>
<div class="t" style="left:359.6px;top:810.0px;font-size:12.5px;line-height:12.5px;letter-spacing:-0.26px;">current set pt</div>
<div class="lb" style="left:356.6px;top:828.3px;width:96.6px;height:10.9px"></div>
<div class="t" style="left:359.6px;top:829.0px;font-size:12.5px;line-height:12.5px;letter-spacing:-0.31px;">current command</div>
<div class="" style="left:106.2px;top:839.4px;width:357.6px;height:88px;border:1px solid;border-color:#dcdcdc #777 #777 #dcdcdc;box-shadow:inset 1px 1px 0 #888,inset -1px -1px 0 #e4e4e4;"></div>
<div class="" style="left:153.9px;top:848.6px;width:298.3px;height:57.8px;background:#000;"></div>
<div class="t" style="left:122.5px;top:844.0px;font-size:12px;line-height:12px;letter-spacing:0.53px;">0.05-</div>
<div class="t" style="left:122.5px;top:900.0px;font-size:12px;line-height:12px;letter-spacing:0.53px;">0.00-</div>
<div class="" style="left:153.5px;top:906.5px;width:1px;height:4px;background:#000"></div>
<div class="" style="left:451.5px;top:906.5px;width:1px;height:4px;background:#000"></div>
<div class="t" style="left:148.7px;top:914.0px;font-size:12.5px;line-height:12.5px;">59</div>
<div class="t" style="left:438.6px;top:914.0px;font-size:12.5px;line-height:12.5px;letter-spacing:-0.15px;">5000</div>
<div class="" style="left:106.2px;top:933.4px;width:357.6px;height:88px;border:1px solid;border-color:#dcdcdc #777 #777 #dcdcdc;box-shadow:inset 1px 1px 0 #888,inset -1px -1px 0 #e4e4e4;"></div>
<div class="" style="left:155.6px;top:942.5px;width:296.6px;height:57.6px;background:#000;"></div>
<div class="t" style="left:110.5px;top:938.0px;font-size:12px;line-height:12px;letter-spacing:0.47px;">0.0270-</div>
<div class="t" style="left:110.5px;top:966.0px;font-size:12px;line-height:12px;letter-spacing:0.47px;">0.0265-</div>
<div class="t" style="left:110.5px;top:994.0px;font-size:12px;line-height:12px;letter-spacing:0.47px;">0.0260-</div>
<div class="" style="left:155.5px;top:1000.3px;width:1px;height:4px;background:#000"></div>
<div class="" style="left:451.5px;top:1000.3px;width:1px;height:4px;background:#000"></div>
<div class="t" style="left:150.7px;top:1008.0px;font-size:12.5px;line-height:12.5px;">60</div>
<div class="t" style="left:438.6px;top:1008.0px;font-size:12.5px;line-height:12.5px;letter-spacing:-0.15px;">5000</div>
<svg style="left:153.900px;top:848.6px" width="299" height="58" viewBox="0 0 299 58"><rect x="1" y="0" width="4.5" height="58" fill="#fff"/><rect x="8" y="0" width="1" height="58" fill="#fff"/><rect x="11.5" y="0" width="2.5" height="0" fill="#fff"/><rect x="14" y="0" width="4" height="12" fill="#fff"/><rect x="18" y="0" width="4" height="23" fill="#fff"/><rect x="22" y="0" width="4" height="11" fill="#fff"/><rect x="26" y="11" width="4" height="12" fill="#fff"/><rect x="30" y="11" width="7" height="12" fill="#fff"/><rect x="37" y="11" width="5" height="12" fill="#fff"/><rect x="42" y="11" width="6" height="11" fill="#fff"/><rect x="48" y="22" width="4" height="14" fill="#fff"/><rect x="52" y="22" width="15" height="14" fill="#fff"/><rect x="16" y="0" width="1" height="40" fill="#000" fill-opacity=".9"/><rect x="19.5" y="0" width="1" height="40" fill="#000" fill-opacity=".9"/><rect x="24" y="0" width="1" height="40" fill="#000" fill-opacity=".9"/><rect x="28" y="0" width="1" height="40" fill="#000" fill-opacity=".9"/><rect x="33" y="0" width="1" height="40" fill="#000" fill-opacity=".9"/><rect x="36" y="0" width="1" height="40" fill="#000" fill-opacity=".9"/><rect x="40" y="0" width="1" height="40" fill="#000" fill-opacity=".9"/><rect x="45" y="0" width="1" height="40" fill="#000" fill-opacity=".9"/><rect x="50" y="0" width="1" height="40" fill="#000" fill-opacity=".9"/><rect x="55" y="0" width="1" height="40" fill="#000" fill-opacity=".9"/><rect x="57" y="0" width="1" height="40" fill="#000" fill-opacity=".9"/><rect x="62" y="0" width="1" height="40" fill="#000" fill-opacity=".9"/><rect x="61" y="11" width=".8" height="12" fill="#fff"/><rect x="64.5" y="36" width=".8" height="11" fill="#fff"/><rect x="29" y="0" width="1" height="12" fill="#fff"/></svg>
<svg style="left:155.600px;top:942.5px" width="297" height="58" viewBox="0 0 297 58" shape-rendering="crispEdges"><rect x="2" y="2" width="1" height="55" fill="#fff"/><rect x="3" y="2" width="1" height="55" fill="#fff"/><rect x="4" y="14" width="1" height="40" fill="#fff"/><rect x="5" y="14" width="1" height="40" fill="#fff"/><rect x="6" y="20" width="1" height="31" fill="#fff"/><rect x="7" y="20" width="1" height="31" fill="#fff"/><rect x="8" y="20" width="1" height="31" fill="#fff"/><rect x="9" y="26" width="1" height="18" fill="#fff"/><rect x="10" y="24" width="1" height="24" fill="#fff"/><rect x="11" y="23" width="1" height="24" fill="#fff"/><rect x="12" y="25" width="1" height="19" fill="#fff"/><rect x="13" y="26" width="1" height="18" fill="#fff"/><rect x="14" y="23" width="1" height="23" fill="#fff"/><rect x="15" y="28" width="1" height="15" fill="#fff"/><rect x="16" y="27" width="1" height="23" fill="#fff"/><rect x="17" y="28" width="1" height="17" fill="#fff"/><rect x="18" y="28" width="1" height="17" fill="#fff"/><rect x="19" y="24" width="1" height="26" fill="#fff"/><rect x="20" y="25" width="1" height="21" fill="#fff"/><rect x="21" y="25" width="1" height="25" fill="#fff"/><rect x="22" y="24" width="1" height="20" fill="#fff"/><rect x="23" y="25" width="1" height="18" fill="#fff"/><rect x="24" y="28" width="1" height="16" fill="#fff"/><rect x="25" y="24" width="1" height="20" fill="#fff"/><rect x="26" y="26" width="1" height="20" fill="#fff"/><rect x="27" y="26" width="1" height="20" fill="#fff"/><rect x="28" y="23" width="1" height="23" fill="#fff"/><rect x="29" y="21" width="1" height="24" fill="#fff"/><rect x="30" y="23" width="1" height="27" fill="#fff"/><rect x="31" y="25" width="1" height="25" fill="#fff"/><rect x="32" y="26" width="1" height="19" fill="#fff"/><rect x="33" y="28" width="1" height="17" fill="#fff"/><rect x="34" y="21" width="1" height="23" fill="#fff"/><rect x="35" y="25" width="1" height="23" fill="#fff"/><rect x="36" y="21" width="1" height="29" fill="#fff"/><rect x="37" y="27" width="1" height="17" fill="#fff"/><rect x="38" y="21" width="1" height="24" fill="#fff"/><rect x="39" y="26" width="1" height="17" fill="#fff"/><rect x="40" y="27" width="1" height="20" fill="#fff"/><rect x="41" y="24" width="1" height="19" fill="#fff"/><rect x="42" y="25" width="1" height="18" fill="#fff"/><rect x="43" y="25" width="1" height="19" fill="#fff"/><rect x="44" y="28" width="1" height="17" fill="#fff"/><rect x="45" y="25" width="1" height="21" fill="#fff"/><rect x="46" y="27" width="1" height="15" fill="#fff"/><rect x="47" y="21" width="1" height="29" fill="#fff"/><rect x="48" y="17" width="1" height="29" fill="#fff"/><rect x="49" y="17" width="1" height="28" fill="#fff"/><rect x="50" y="23" width="1" height="22" fill="#fff"/><rect x="51" y="23" width="1" height="21" fill="#fff"/><rect x="52" y="28" width="1" height="17" fill="#fff"/><rect x="53" y="28" width="1" height="15" fill="#fff"/><rect x="54" y="27" width="1" height="23" fill="#fff"/><rect x="55" y="23" width="1" height="19" fill="#fff"/><rect x="56" y="26" width="1" height="20" fill="#fff"/><rect x="57" y="26" width="1" height="24" fill="#fff"/><rect x="58" y="26" width="1" height="18" fill="#fff"/><rect x="59" y="28" width="1" height="17" fill="#fff"/><rect x="60" y="25" width="1" height="20" fill="#fff"/><rect x="61" y="27" width="1" height="19" fill="#fff"/><rect x="62" y="25" width="1" height="22" fill="#fff"/><rect x="63" y="23" width="1" height="23" fill="#fff"/><rect x="64" y="19" width="1" height="29" fill="#fff"/><rect x="65" y="19" width="1" height="31" fill="#fff"/><rect x="66" y="23" width="1" height="22" fill="#fff"/><rect x="67" y="25" width="1" height="19" fill="#fff"/><rect x="2" y="29" width="66" height="13" fill="#fff"/><rect x="2" y="0" width="1.500" height="58" fill="#fff"/></svg>
<div class="f" style="left:468.7px;top:847.9px;width:45.7px;height:14.5px;background:#c6c6c6;"></div>
<div class="t" style="left:472.7px;top:851.0px;font-size:11.7px;line-height:11.7px;letter-spacing:0.20px;">0.0200</div>
<div class="f" style="left:471.2px;top:940.5px;width:45.2px;height:13.8px;background:#c6c6c6;"></div>
<div class="t" style="left:475.2px;top:943.0px;font-size:11.7px;line-height:11.7px;letter-spacing:0.20px;">0.0264</div>
<div class="" style="left:468px;top:891.8px;width:113.7px;height:38.2px;background:#b3b3b3;border:1px solid;border-color:#e0e0e0 #777 #777 #e0e0e0;"></div>
<div class="f" style="left:471.2px;top:895px;width:64.2px;height:11.1px;background:#b8b8b8;"></div>
<div class="" style="left:532px;top:897px;width:1px;height:10px;background:#555"></div>
<div class="" style="left:534px;top:897px;width:1px;height:10px;background:#555"></div>
<div class="" style="left:536px;top:897px;width:1px;height:10px;background:#555"></div>
<div class="" style="left:543.6px;top:895px;width:15px;height:13.5px;background:#c0c0c0;border:1px solid;border-color:#eee #666 #666 #eee;"></div>
<div class="t" style="left:551.0px;top:896.0px;font-size:9.5px;line-height:9.5px;">X</div>
<svg style="left:544px;top:895px" width="16" height="15"><path d="M6 1v11h9M6 12l-5 3" stroke="#000" stroke-width="1.3" fill="none"/></svg>
<div class="" style="left:560.7px;top:895px;width:17.8px;height:13.5px;background:#c0c0c0;border:1px solid;border-color:#eee #666 #666 #eee;"></div>
<div class="t m b" style="left:562.0px;top:897.0px;font-size:8px;line-height:8px;letter-spacing:-0.80px;">x.xx</div>
<svg style="left:572px;top:904px" width="7" height="5"><path d="M0 0h7L3.500 4z" fill="#000"/></svg>
<div class="f" style="left:471.2px;top:914px;width:64.2px;height:11.1px;background:#b8b8b8;"></div>
<div class="" style="left:532px;top:916px;width:1px;height:10px;background:#555"></div>
<div class="" style="left:534px;top:916px;width:1px;height:10px;background:#555"></div>
<div class="" style="left:536px;top:916px;width:1px;height:10px;background:#555"></div>
<div class="" style="left:543.6px;top:914px;width:15px;height:13.5px;background:#c0c0c0;border:1px solid;border-color:#eee #666 #666 #eee;"></div>
<div class="t" style="left:551.0px;top:916.0px;font-size:9.5px;line-height:9.5px;">Y</div>
<svg style="left:544px;top:914px" width="16" height="15"><path d="M6 1v11h9M6 12l-5 3" stroke="#000" stroke-width="1.3" fill="none"/></svg>
<div class="" style="left:560.7px;top:914px;width:17.8px;height:13.5px;background:#c0c0c0;border:1px solid;border-color:#eee #666 #666 #eee;"></div>
<div class="t m b" style="left:562.0px;top:916.0px;font-size:8px;line-height:8px;letter-spacing:-0.80px;">y.yy</div>
<svg style="left:572px;top:923px" width="7" height="5"><path d="M0 0h7L3.500 4z" fill="#000"/></svg>
<div class="" style="left:468px;top:985.5px;width:113.7px;height:38.2px;background:#b3b3b3;border:1px solid;border-color:#e0e0e0 #777 #777 #e0e0e0;"></div>
<div class="f" style="left:471.2px;top:988.7px;width:64.2px;height:11.1px;background:#b8b8b8;"></div>
<div class="" style="left:532px;top:990.7px;width:1px;height:10px;background:#555"></div>
<div class="" style="left:534px;top:990.7px;width:1px;height:10px;background:#555"></div>
<div class="" style="left:536px;top:990.7px;width:1px;height:10px;background:#555"></div>
<div class="" style="left:543.6px;top:988.7px;width:15px;height:13.5px;background:#c0c0c0;border:1px solid;border-color:#eee #666 #666 #eee;"></div>
<div class="t" style="left:551.0px;top:990.0px;font-size:9.5px;line-height:9.5px;">X</div>
<svg style="left:544px;top:988.7px" width="16" height="15"><path d="M6 1v11h9M6 12l-5 3" stroke="#000" stroke-width="1.3" fill="none"/></svg>
<div class="" style="left:560.7px;top:988.7px;width:17.8px;height:13.5px;background:#c0c0c0;border:1px solid;border-color:#eee #666 #666 #eee;"></div>
<div class="t m b" style="left:562.0px;top:991.0px;font-size:8px;line-height:8px;letter-spacing:-0.80px;">x.xx</div>
<svg style="left:572px;top:997.7px" width="7" height="5"><path d="M0 0h7L3.500 4z" fill="#000"/></svg>
<div class="f" style="left:471.2px;top:1007.7px;width:64.2px;height:11.1px;background:#b8b8b8;"></div>
<div class="" style="left:532px;top:1009.7px;width:1px;height:10px;background:#555"></div>
<div class="" style="left:534px;top:1009.7px;width:1px;height:10px;background:#555"></div>
<div class="" style="left:536px;top:1009.7px;width:1px;height:10px;background:#555"></div>
<div class="" style="left:543.6px;top:1007.7px;width:15px;height:13.5px;background:#c0c0c0;border:1px solid;border-color:#eee #666 #666 #eee;"></div>
<div class="t" style="left:551.0px;top:1009.0px;font-size:9.5px;line-height:9.5px;">Y</div>
<svg style="left:544px;top:1007.7px" width="16" height="15"><path d="M6 1v11h9M6 12l-5 3" stroke="#000" stroke-width="1.3" fill="none"/></svg>
<div class="" style="left:560.7px;top:1007.7px;width:17.8px;height:13.5px;background:#c0c0c0;border:1px solid;border-color:#eee #666 #666 #eee;"></div>
<div class="t m b" style="left:562.0px;top:1010.0px;font-size:8px;line-height:8px;letter-spacing:-0.80px;">y.yy</div>
<svg style="left:572px;top:1016.7px" width="7" height="5"><path d="M0 0h7L3.500 4z" fill="#000"/></svg>
<!-- sticky -->
<div class="" style="left:708px;top:902px;width:296px;height:132.5px;background:#fef49c;border-right:1px solid #d2ca3c;border-bottom:1px solid #c4bc30;box-shadow:0 3px 8px rgba(0,0,0,.5);"></div>
<div class="" style="left:708px;top:902px;width:296px;height:12px;background:#fdf39a;border-bottom:1px solid #a89c18;"></div>
<div class="t" style="left:718.6px;top:920.0px;font-size:12.26px;line-height:12.26px;">1251 239.84/0.9375//0.026384/0.0048</div>
<div class="t" style="left:718.6px;top:934.0px;font-size:12.26px;line-height:12.26px;">1315 239.83/0.9410/-2.3834/0.00516 V0.04038</div>
<div class="t" style="left:718.6px;top:948.0px;font-size:12.26px;line-height:12.26px;">1415 239.71/0.9534/-2.1952/0.00606 V0.03061</div>
<div class="t" style="left:718.6px;top:962.0px;font-size:12.26px;line-height:12.26px;">1515 239.79/0.9625/-2.0311/0.00668 V0.02597</div>
<!-- menubar -->
<div class="" style="left:0px;top:0px;width:1052px;height:21px;background:linear-gradient(180deg,rgba(255,255,255,.38) 0,rgba(255,255,255,.12) 35%,rgba(255,255,255,0) 55%,rgba(70,20,90,.2) 88%,rgba(40,10,60,.42) 100%),linear-gradient(90deg,#c9bed0 0,#cbbdd2 12%,#d8bfdc 30%,#e8c6e8 50%,#efd0ef 61%,#e6c6e7 75%,#dec4e2 90%,#d6c0dc 100%);border-bottom:1px solid #2c1238;"></div>
<div class="t" style="left:889.0px;top:3.0px;font-size:15px;line-height:15px;letter-spacing:0.20px;color:#222;">Jul 25  15:22:19</div>
<svg style="left:768px;top:1px" width="270" height="19" viewBox="0 0 270 19"><g fill="none" stroke="#9a8fa6" stroke-width="1.4"><circle cx="12" cy="10" r="6.5"/><path d="M12 6v4l3 2M1 8l3 3 3-3"/></g><g fill="#5a5064"><circle cx="41" cy="10" r="1.3"/><circle cx="36" cy="10" r="1"/><circle cx="46" cy="10" r="1"/><circle cx="41" cy="5.500" r="1"/><circle cx="41" cy="14.5" r="1"/></g><path d="M60 7.500Q71 -1 82 7.500L71 17z" fill="none" stroke="#b0a4bc" stroke-width="1.2"/><g fill="#222"><path d="M92 7.500h3.500l4.500-4v13l-4.500-4H92z"/></g><g fill="none" stroke="#222" stroke-width="1.3"><path d="M102.500 7q2 3 0 6M105 5q3.500 5 0 10M107.500 3q5 7 0 14"/></g><g fill="none" stroke="#222" stroke-width="2"><circle cx="254.500" cy="8.500" r="5"/><path d="M258 12.500l5 5"/></g></svg>
</div>
</body></html>
